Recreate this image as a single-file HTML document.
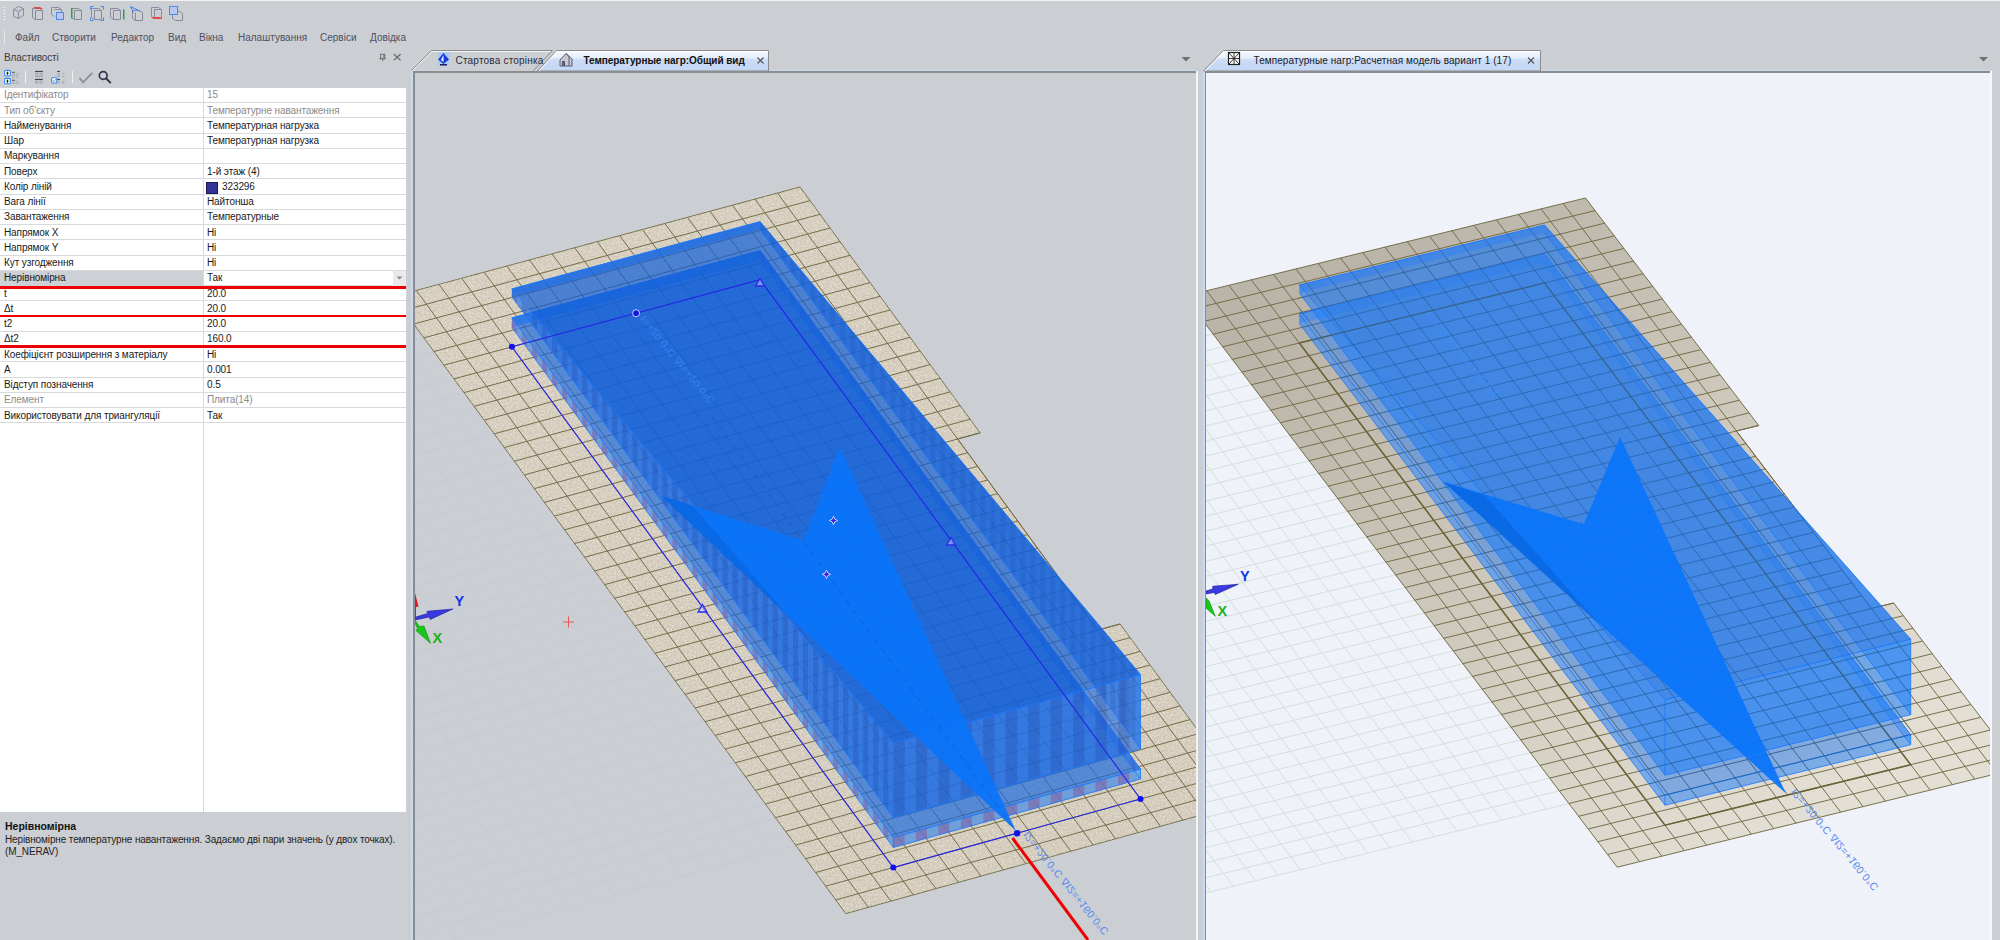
<!DOCTYPE html>
<html><head><meta charset="utf-8">
<style>
*{box-sizing:border-box;margin:0;padding:0}
html,body{width:2000px;height:940px;overflow:hidden;background:#cbced3;font-family:"Liberation Sans",sans-serif;color:#1e1e1e}
.a{position:absolute}
.t{position:absolute;white-space:pre;font-size:10px;line-height:12px}
#menu .t{color:#50505e;letter-spacing:0px}
#grid{position:absolute;left:0;top:88px;width:406px;height:724px;background:#fff}
.row{position:absolute;left:0;width:406px;height:15.25px;border-bottom:1px solid #d8d9dc}
.row .k{position:absolute;left:4px;top:1.5px;font-size:10px;line-height:12px;letter-spacing:-0.1px;white-space:pre;color:#1a1a1a}
.row .v{position:absolute;left:207px;top:1.5px;font-size:10px;line-height:12px;letter-spacing:-0.1px;white-space:pre;color:#1a1a1a}
.row.g .k,.row.g .v{color:#8a8a8a}
.redl{position:absolute;left:0;width:406px;height:2px;background:#ee0000}
</style></head><body>

<!-- top toolbar -->
<div class="a" style="left:0;top:0;width:2000px;height:1px;background:#f2f3f5"></div>
<svg class="a" style="left:0;top:0" width="200" height="26" viewBox="0 0 200 26">
  <g fill="none" stroke="#7b7b93" stroke-width="1">
    <!-- dotted handle -->
  </g>
  <g fill="#fff"><rect x="4" y="7" width="1" height="1"/><rect x="4" y="10" width="1" height="1"/><rect x="4" y="13" width="1" height="1"/><rect x="4" y="16" width="1" height="1"/><rect x="4" y="19" width="1" height="1"/></g>
  <g fill="none" stroke="#8a8aa0" stroke-width="1">
    <path d="M13.5 9.5 l5-3 5 2 v7 l-5 3 -5-2z M13.5 9.5 l5 2 5-3 M18.5 11.5 v7"/>
    <path d="M32.5 8.5 h7 l3 2 v9 h-7 l-3-2z M35.5 10.5 h7 M35.5 10.5 v9"/>
    <path d="M51.5 7.5 h7 l3 2 v3 M51.5 7.5 v7 l3 2 M54.5 9.5 h7"/>
    <path d="M71.5 8.5 h7 l3 2 v9 h-7 l-3-2z M74.5 10.5 h7 M74.5 10.5 v9"/>
    <path d="M91.5 8.5 h7 l3 2 v9 h-7 l-3-2z M94.5 10.5 h7 M94.5 10.5 v9"/>
    <path d="M110.5 8.5 h7 l3 2 v9 h-7 l-3-2z M113.5 10.5 h7 M113.5 10.5 v9"/>
    <path d="M132.5 10.5 h7 l3 2 v8 h-7 l-3-2z M135.5 12.5 v8"/>
    <path d="M151.5 7.5 h7 l3 2 v9 h-7 l-3-2z M154.5 9.5 h7 M154.5 9.5 v9"/>
    <path d="M172.5 11.5 h7 l3 2 v7 h-7 l-3-2z"/>
  </g>
  <path d="M33 7 h7 l3 2 h-7z" fill="#e84545"/>
  <rect x="56.5" y="12.5" width="7" height="7" fill="#b8c8f0" stroke="#4a8af5"/>
  <path d="M71 8 v10 l1.5 1 v-10z" fill="#2aa040"/>
  <path d="M90.5 9.5 v-3 h3 M100.5 6.5 h3 v3 M103.5 17.5 v3 h-3 M93.5 20.5 h-3 v-3" fill="none" stroke="#3a8af5"/>
  <path d="M123 9 v10 l1.5 1 v-10z" fill="#2aa040"/>
  <path d="M130.5 6.5 l10 5 M130.5 6.5 l3 6" fill="none" stroke="#3a7af5"/>
  <path d="M151 17 h9 l2.5 2 h-9z" fill="#e84545"/>
  <rect x="169.5" y="6.5" width="8" height="8" fill="#b8c8f0" stroke="#4a8af5"/>
</svg>

<!-- menu -->
<div id="menu">
<div class="a" style="left:4px;top:30px;width:1px;height:13px;border-left:1px dotted #fff"></div>
<div class="t" style="left:15px;top:31.5px">Файл</div>
<div class="t" style="left:52px;top:31.5px">Створити</div>
<div class="t" style="left:111px;top:31.5px">Редактор</div>
<div class="t" style="left:168px;top:31.5px">Вид</div>
<div class="t" style="left:199px;top:31.5px">Вікна</div>
<div class="t" style="left:238px;top:31.5px">Налаштування</div>
<div class="t" style="left:320px;top:31.5px">Сервіси</div>
<div class="t" style="left:370px;top:31.5px">Довідка</div>
</div>

<!-- properties header -->
<div class="t" style="left:4px;top:52px;color:#3c3c44;letter-spacing:-0.1px">Властивості</div>
<svg class="a" style="left:376px;top:50px" width="14" height="14" viewBox="376 50 14 14"><rect x="380.6" y="54.3" width="4.2" height="4.3" fill="none" stroke="#777" stroke-width="1.1"/><rect x="383.3" y="54.3" width="1.5" height="4.3" fill="#777"/><path d="M379.2 58.8h6.8M382.6 59v2" stroke="#777" stroke-width="1.1"/></svg>
<svg class="a" style="left:393px;top:53px" width="10" height="10"><path d="M0.8 1 L7.6 7.4 M7.6 1 L0.8 7.4" stroke="#6a6a6a" stroke-width="1.3"/></svg>

<!-- properties toolbar -->
<svg class="a" style="left:0;top:64px" width="120" height="24" viewBox="0 64 120 24">
  <rect x="4.6" y="70.4" width="5.8" height="5.3" rx="1" fill="#fff" stroke="#3a8af5" stroke-width="1.1"/>
  <rect x="4.6" y="78.4" width="5.8" height="5.3" rx="1" fill="#fff" stroke="#3a8af5" stroke-width="1.1"/>
  <path d="M7.5 71.6v3.2M6.3 73.2h2.4M7.5 79.6v3.2M6.3 81.2h2.4" stroke="#111" stroke-width="0.9"/>
  <path d="M12 72.3h3M12 80.3h3" stroke="#555" stroke-width="0.9"/>
  <path d="M12 74h3M12 75.5h3M15.8 73.5h2.8M15.8 75.3h2.8M12 77.2h3M15.8 77.2h2.8M12 82h3M12 83.5h3M15.8 81.5h2.8M15.8 83.3h2.8" stroke="#a8a8b8" stroke-width="0.9"/>
  <path d="M25.5 71v12" stroke="#f2f2f2" stroke-width="1"/>
  <path d="M35 71.4h7.9M35 79.4h7.9" stroke="#333" stroke-width="1"/>
  <path d="M35 73.2h3.5M39.4 73.2h3.5M35 74.9h3.5M39.4 74.9h3.5M35 76.5h7.9M35 81.2h3.5M39.4 81.2h3.5M35 83h3.5M39.4 83h3.5" stroke="#a0a0b4" stroke-width="1"/>
  <path d="M57.2 71.4h2.8M57.2 79.4h2.8" stroke="#333" stroke-width="1"/>
  <path d="M57.2 73.2h2.8M57.2 74.9h2.8M57.2 76.5h2.8M62 73.5h2.6M62 76.3h2.6M57.2 81.2h2.8M57.2 83h2.8M62 81.5h2.6M62 83.2h2.6" stroke="#a8a8bc" stroke-width="1"/>
  <rect x="51.6" y="77.8" width="5.2" height="5.2" rx="1" fill="#fff" stroke="#3a8af5" stroke-width="1.1"/>
  <path d="M52.6 80.2l1.3 1.6 2.3-3" fill="none" stroke="#777" stroke-width="0.8"/>
  <path d="M72.5 71v12" stroke="#f2f2f2" stroke-width="1"/>
  <path d="M79.5 77.8 L83.1 82.4 L92.2 72.8" fill="none" stroke="#8e90a4" stroke-width="1.9"/>
  <circle cx="103.2" cy="75.5" r="3.9" fill="none" stroke="#33334e" stroke-width="1.7"/>
  <path d="M106 78.3 L110.8 83.1" stroke="#33334e" stroke-width="2"/>
</svg>

<!-- property grid -->
<div id="grid">
  <div class="a" style="left:203px;top:0;width:1px;height:724px;background:#d8d9dc"></div>
</div>
<div id="rows">
<div class="row g" style="top:87.90px"><div class="k">Ідентифікатор</div><div class="v">15</div></div>
<div class="row g" style="top:103.15px"><div class="k">Тип об'єкту</div><div class="v">Температурне навантаження</div></div>
<div class="row" style="top:118.40px"><div class="k">Найменування</div><div class="v">Температурная нагрузка</div></div>
<div class="row" style="top:133.65px"><div class="k">Шар</div><div class="v">Температурная нагрузка</div></div>
<div class="row" style="top:148.90px"><div class="k">Маркування</div><div class="v"></div></div>
<div class="row" style="top:164.15px"><div class="k">Поверх</div><div class="v">1-й этаж (4)</div></div>
<div class="row" style="top:179.40px"><div class="k">Колір ліній</div><div class="a" style="left:206px;top:2.5px;width:12px;height:12px;background:#323296;border:1px solid #1a1a50"></div><div class="v" style="left:222px">323296</div></div>
<div class="row" style="top:194.65px"><div class="k">Вага лінії</div><div class="v">Найтонша</div></div>
<div class="row" style="top:209.90px"><div class="k">Завантаження</div><div class="v">Температурные</div></div>
<div class="row" style="top:225.15px"><div class="k">Напрямок X</div><div class="v">Ні</div></div>
<div class="row" style="top:240.40px"><div class="k">Напрямок Y</div><div class="v">Ні</div></div>
<div class="row" style="top:255.65px"><div class="k">Кут узгодження</div><div class="v">Ні</div></div>
<div class="row" style="top:270.90px"><div class="a" style="left:0;top:0;width:203px;height:15px;background:#cdd0d5"></div><div class="a" style="left:393px;top:0;width:13px;height:15px;background:#e9eaec"></div><svg class="a" style="left:396px;top:5px" width="7" height="5"><path d="M0.5 0.5h6l-3 3z" fill="#8a8a8a"/></svg><div class="k">Нерівномірна</div><div class="v">Так</div></div>
<div class="row" style="top:286.15px"><div class="k">t</div><div class="v">20.0</div></div>
<div class="row" style="top:301.40px"><div class="k">Δt</div><div class="v">20.0</div></div>
<div class="row" style="top:316.65px"><div class="k">t2</div><div class="v">20.0</div></div>
<div class="row" style="top:331.90px"><div class="k">Δt2</div><div class="v">160.0</div></div>
<div class="row" style="top:347.15px"><div class="k">Коефіцієнт розширення з матеріалу</div><div class="v">Ні</div></div>
<div class="row" style="top:362.40px"><div class="k">A</div><div class="v">0.001</div></div>
<div class="row" style="top:377.65px"><div class="k">Відступ позначення</div><div class="v">0.5</div></div>
<div class="row g" style="top:392.90px"><div class="k">Елемент</div><div class="v">Плита(14)</div></div>
<div class="row" style="top:408.15px"><div class="k">Використовувати для триангуляції</div><div class="v">Так</div></div>
<div class="redl" style="top:286px;height:2.5px"></div><div class="redl" style="top:314.9px;height:2.5px"></div><div class="redl" style="top:345.1px;height:2.5px"></div>
</div>

<!-- description -->
<div class="a" style="left:1px;top:812px;width:404px;height:128px;background:#cbced3"></div>
<div class="t" style="left:5px;top:820px;font-weight:bold;font-size:10.5px;color:#111">Нерівномірна</div>
<div class="t" style="left:5px;top:833.5px;letter-spacing:-0.13px;color:#222">Нерівномірне температурне навантаження. Задаємо дві пари значень (у двох точках).</div>
<div class="t" style="left:5px;top:845.5px;letter-spacing:-0.13px;color:#222">(M_NERAV)</div>

<!-- splitter -->
<div class="a" style="left:406px;top:88px;width:5px;height:852px;background:#cbced3"></div>

<!-- VIEWPORT 1 -->
<div id="vp1"><svg class="a" style="left:415px;top:73px" width="781" height="867" viewBox="415 73 781 867">
<rect x="415" y="73" width="781" height="867" fill="#cbced3"/>
<path d="M-392.4 343.2L114.0 1033.5M-369.4 337.0L136.9 1027.2M-346.4 330.8L159.7 1020.9M-323.4 324.7L182.6 1014.6M-300.4 318.5L205.4 1008.3M-277.4 312.4L228.3 1001.9M-254.5 306.2L251.1 995.6M-231.6 300.1L273.9 989.3M-208.6 293.9L296.7 983.0M-185.7 287.8L319.5 976.7M-162.8 281.6L342.2 970.4M-139.9 275.5L365.0 964.1M-117.0 269.4L387.8 957.8M-94.1 263.2L410.5 951.5M-71.3 257.1L433.3 945.3M-48.4 251.0L456.0 939.0M-25.6 244.8L478.7 932.7M-2.7 238.7L501.4 926.4M20.1 232.6L524.1 920.1M42.9 226.5L546.8 913.9M65.7 220.4L569.4 907.6M88.5 214.3L592.1 901.3M111.3 208.2L614.8 895.1M134.1 202.0L637.4 888.8M156.8 195.9L660.0 882.6M179.6 189.8L682.6 876.3M202.3 183.8L705.3 870.1M225.0 177.7L727.9 863.8M247.8 171.6L750.4 857.6M270.5 165.5L773.0 851.3M293.2 159.4L795.6 845.1M-392.4 343.2L293.2 159.4M-382.2 357.0L303.2 173.1M-372.1 370.8L313.3 186.8M-362.0 384.6L323.3 200.6M-351.8 398.4L333.4 214.3M-341.7 412.2L343.4 228.0M-331.6 426.1L353.5 241.7M-321.4 439.9L363.5 255.4M-311.3 453.7L373.6 269.2M-301.2 467.5L383.6 282.9M-291.0 481.3L393.7 296.6M-280.9 495.1L403.8 310.3M-270.8 508.9L413.8 324.0M-260.7 522.7L423.9 337.8M-250.5 536.6L433.9 351.5M-240.4 550.4L444.0 365.2M-230.3 564.2L454.0 378.9M-220.1 578.0L464.1 392.6M-210.0 591.8L474.1 406.3M-199.9 605.6L484.2 420.1M-189.8 619.4L494.2 433.8M-179.6 633.2L504.3 447.5M-169.5 647.0L514.3 461.2M-159.4 660.8L524.4 474.9M-149.2 674.7L534.4 488.6M-139.1 688.5L544.5 502.3M-129.0 702.3L554.5 516.1M-118.9 716.1L564.6 529.8M-108.7 729.9L574.6 543.5M-98.6 743.7L584.6 557.2M-88.5 757.5L594.7 570.9M-78.4 771.3L604.7 584.6M-68.2 785.1L614.8 598.3M-58.1 798.9L624.8 612.0M-48.0 812.7L634.9 625.8M-37.9 826.5L644.9 639.5M-27.7 840.3L655.0 653.2M-17.6 854.1L665.0 666.9M-7.5 867.9L675.1 680.6M2.6 881.7L685.1 694.3M12.8 895.5L695.2 708.0M22.9 909.3L705.2 721.7M33.0 923.1L715.2 735.4M43.1 936.9L725.3 749.1M53.3 950.7L735.3 762.8M63.4 964.5L745.4 776.5M73.5 978.3L755.4 790.3M83.6 992.1L765.5 804.0M93.8 1005.9L775.5 817.7M103.9 1019.7L785.5 831.4M114.0 1033.5L795.6 845.1" stroke="#c6cad9" stroke-width="1" fill="none"/>
<defs><linearGradient id="sg1" gradientUnits="userSpaceOnUse" x1="597" y1="242" x2="1048" y2="857"><stop offset="0" stop-color="#d3cab9"/><stop offset="1" stop-color="#d1c8b7"/></linearGradient></defs>
<polygon points="393.7,296.6 800.0,187.0 980.1,432.9 957.6,439.0 1097.6,630.2 1120.1,624.0 1250.0,801.5 845.8,913.6" fill="url(#sg1)" stroke="#6f6843" stroke-width="0.95"/>
<filter id="spk1" x="0" y="0" width="1" height="1"><feTurbulence type="fractalNoise" baseFrequency="0.55" numOctaves="2" seed="7" result="n"/><feColorMatrix in="n" type="matrix" values="0 0 0 0 1  0 0 0 0 1  0 0 0 0 1  0 0 0 -2.2 1.35"/><feComposite in2="SourceGraphic" operator="in"/></filter>
<polygon points="393.7,296.6 800.0,187.0 980.1,432.9 957.6,439.0 1097.6,630.2 1120.1,624.0 1250.0,801.5 845.8,913.6" fill="#fff" filter="url(#spk1)" opacity="0.45"/>
<filter id="spd1" x="0" y="0" width="1" height="1"><feTurbulence type="fractalNoise" baseFrequency="0.5" numOctaves="2" seed="11" result="n"/><feColorMatrix in="n" type="matrix" values="0 0 0 0 0.45  0 0 0 0 0.4  0 0 0 0 0.32  0 0 0 2.4 -1.35"/><feComposite in2="SourceGraphic" operator="in"/></filter>
<polygon points="393.7,296.6 800.0,187.0 980.1,432.9 957.6,439.0 1097.6,630.2 1120.1,624.0 1250.0,801.5 845.8,913.6" fill="#000" filter="url(#spd1)" opacity="0.45"/>
<path d="M416.4 290.5L868.3 907.3M439.0 284.4L890.9 901.1M461.7 278.3L913.4 894.9M484.3 272.2L935.9 888.6M506.9 266.1L958.4 882.4M529.5 260.0L980.9 876.1M552.1 253.9L1003.4 869.9M574.7 247.8L1025.9 863.7M597.3 241.7L1048.3 857.4M619.8 235.6L1070.8 851.2M642.4 229.5L1093.2 845.0M664.9 223.4L1115.6 838.8M687.5 217.4L1138.1 832.5M710.0 211.3L1160.5 826.3M732.5 205.2L1182.9 820.1M755.0 199.1L1205.3 813.9M777.5 193.1L957.6 439.0M1097.6 630.2L1227.6 807.7M957.6 439.0L1097.6 630.2M403.8 310.3L810.0 200.7M413.8 324.0L820.0 214.3M423.9 337.8L830.0 228.0M433.9 351.5L840.0 241.6M444.0 365.2L850.0 255.3M454.0 378.9L860.0 269.0M464.1 392.6L870.0 282.6M474.1 406.3L880.0 296.3M484.2 420.1L890.0 310.0M494.2 433.8L900.0 323.6M504.3 447.5L910.0 337.3M514.3 461.2L920.0 350.9M524.4 474.9L930.1 364.6M534.4 488.6L940.1 378.3M544.5 502.3L950.1 391.9M554.5 516.1L960.1 405.6M564.6 529.8L970.1 419.2M574.6 543.5L980.1 432.9M584.6 557.2L967.6 452.7M594.7 570.9L977.6 466.3M604.7 584.6L987.6 480.0M614.8 598.3L997.6 493.6M624.8 612.0L1007.6 507.3M634.9 625.8L1017.6 521.0M644.9 639.5L1027.6 534.6M655.0 653.2L1037.6 548.3M665.0 666.9L1047.6 561.9M675.1 680.6L1057.6 575.6M685.1 694.3L1067.6 589.2M695.2 708.0L1077.6 602.9M705.2 721.7L1087.6 616.6M715.2 735.4L1120.1 624.0M725.3 749.1L1130.0 637.7M735.3 762.8L1140.0 651.4M745.4 776.5L1150.0 665.0M755.4 790.3L1160.0 678.7M765.5 804.0L1170.0 692.3M775.5 817.7L1180.0 706.0M785.5 831.4L1190.0 719.6M795.6 845.1L1200.0 733.3M805.6 858.8L1210.0 746.9M815.7 872.5L1220.0 760.6M825.7 886.2L1230.0 774.2M835.8 899.9L1240.0 787.9" stroke="#6f6843" stroke-width="0.95" fill="none"/>

<polygon points="511.9,327.3 760.1,260.1 760.1,250.6 511.9,317.8" fill="#3a8cff" fill-opacity="0.75"/>
<polygon points="760.1,260.1 1140.5,779.0 1140.5,769.0 760.1,250.6" fill="#1f64d8" fill-opacity="0.5"/>
<polygon points="893.3,847.5 511.9,327.3 511.9,317.8 893.3,837.5" fill="#1f64d8" fill-opacity="0.5"/>
<polygon points="1140.5,779.0 893.3,847.5 893.3,837.5 1140.5,769.0" fill="#1f64d8" fill-opacity="0.5"/>
<polygon points="511.9,327.3 516.9,334.2 516.9,324.7 511.9,317.8" fill="#8a74b0" fill-opacity="0.7"/>
<polygon points="516.9,334.2 521.9,341.0 521.9,331.5 516.9,324.7" fill="#78b0e6" fill-opacity="0.6"/>
<polygon points="521.9,341.0 526.9,347.9 526.9,338.3 521.9,331.5" fill="#8a74b0" fill-opacity="0.7"/>
<polygon points="526.9,347.9 532.0,354.7 532.0,345.2 526.9,338.3" fill="#78b0e6" fill-opacity="0.6"/>
<polygon points="532.0,354.7 537.0,361.5 537.0,352.0 532.0,345.2" fill="#8a74b0" fill-opacity="0.7"/>
<polygon points="537.0,361.5 542.0,368.4 542.0,358.9 537.0,352.0" fill="#78b0e6" fill-opacity="0.6"/>
<polygon points="542.0,368.4 547.0,375.2 547.0,365.7 542.0,358.9" fill="#8a74b0" fill-opacity="0.7"/>
<polygon points="547.0,375.2 552.0,382.1 552.0,372.5 547.0,365.7" fill="#78b0e6" fill-opacity="0.6"/>
<polygon points="552.0,382.1 557.1,388.9 557.1,379.4 552.0,372.5" fill="#8a74b0" fill-opacity="0.7"/>
<polygon points="557.1,388.9 562.1,395.8 562.1,386.2 557.1,379.4" fill="#78b0e6" fill-opacity="0.6"/>
<polygon points="562.1,395.8 567.1,402.6 567.1,393.1 562.1,386.2" fill="#8a74b0" fill-opacity="0.7"/>
<polygon points="567.1,402.6 572.1,409.5 572.1,399.9 567.1,393.1" fill="#78b0e6" fill-opacity="0.6"/>
<polygon points="572.1,409.5 577.1,416.3 577.1,406.7 572.1,399.9" fill="#8a74b0" fill-opacity="0.7"/>
<polygon points="577.1,416.3 582.2,423.2 582.2,413.6 577.1,406.7" fill="#78b0e6" fill-opacity="0.6"/>
<polygon points="582.2,423.2 587.2,430.0 587.2,420.4 582.2,413.6" fill="#8a74b0" fill-opacity="0.7"/>
<polygon points="587.2,430.0 592.2,436.9 592.2,427.3 587.2,420.4" fill="#78b0e6" fill-opacity="0.6"/>
<polygon points="592.2,436.9 597.2,443.7 597.2,434.1 592.2,427.3" fill="#8a74b0" fill-opacity="0.7"/>
<polygon points="597.2,443.7 602.2,450.6 602.2,440.9 597.2,434.1" fill="#78b0e6" fill-opacity="0.6"/>
<polygon points="602.2,450.6 607.3,457.4 607.3,447.8 602.2,440.9" fill="#8a74b0" fill-opacity="0.7"/>
<polygon points="607.3,457.4 612.3,464.2 612.3,454.6 607.3,447.8" fill="#78b0e6" fill-opacity="0.6"/>
<polygon points="612.3,464.2 617.3,471.1 617.3,461.4 612.3,454.6" fill="#8a74b0" fill-opacity="0.7"/>
<polygon points="617.3,471.1 622.3,477.9 622.3,468.3 617.3,461.4" fill="#78b0e6" fill-opacity="0.6"/>
<polygon points="622.3,477.9 627.4,484.8 627.4,475.1 622.3,468.3" fill="#8a74b0" fill-opacity="0.7"/>
<polygon points="627.4,484.8 632.4,491.6 632.4,482.0 627.4,475.1" fill="#78b0e6" fill-opacity="0.6"/>
<polygon points="632.4,491.6 637.4,498.5 637.4,488.8 632.4,482.0" fill="#8a74b0" fill-opacity="0.7"/>
<polygon points="637.4,498.5 642.4,505.3 642.4,495.6 637.4,488.8" fill="#78b0e6" fill-opacity="0.6"/>
<polygon points="642.4,505.3 647.4,512.2 647.4,502.5 642.4,495.6" fill="#8a74b0" fill-opacity="0.7"/>
<polygon points="647.4,512.2 652.5,519.0 652.5,509.3 647.4,502.5" fill="#78b0e6" fill-opacity="0.6"/>
<polygon points="652.5,519.0 657.5,525.8 657.5,516.2 652.5,509.3" fill="#8a74b0" fill-opacity="0.7"/>
<polygon points="657.5,525.8 662.5,532.7 662.5,523.0 657.5,516.2" fill="#78b0e6" fill-opacity="0.6"/>
<polygon points="662.5,532.7 667.5,539.5 667.5,529.8 662.5,523.0" fill="#8a74b0" fill-opacity="0.7"/>
<polygon points="667.5,539.5 672.5,546.4 672.5,536.7 667.5,529.8" fill="#78b0e6" fill-opacity="0.6"/>
<polygon points="672.5,546.4 677.5,553.2 677.5,543.5 672.5,536.7" fill="#8a74b0" fill-opacity="0.7"/>
<polygon points="677.5,553.2 682.6,560.1 682.6,550.3 677.5,543.5" fill="#78b0e6" fill-opacity="0.6"/>
<polygon points="682.6,560.1 687.6,566.9 687.6,557.2 682.6,550.3" fill="#8a74b0" fill-opacity="0.7"/>
<polygon points="687.6,566.9 692.6,573.8 692.6,564.0 687.6,557.2" fill="#78b0e6" fill-opacity="0.6"/>
<polygon points="692.6,573.8 697.6,580.6 697.6,570.9 692.6,564.0" fill="#8a74b0" fill-opacity="0.7"/>
<polygon points="697.6,580.6 702.6,587.4 702.6,577.7 697.6,570.9" fill="#78b0e6" fill-opacity="0.6"/>
<polygon points="702.6,587.4 707.7,594.3 707.7,584.5 702.6,577.7" fill="#8a74b0" fill-opacity="0.7"/>
<polygon points="707.7,594.3 712.7,601.1 712.7,591.4 707.7,584.5" fill="#78b0e6" fill-opacity="0.6"/>
<polygon points="712.7,601.1 717.7,608.0 717.7,598.2 712.7,591.4" fill="#8a74b0" fill-opacity="0.7"/>
<polygon points="717.7,608.0 722.7,614.8 722.7,605.0 717.7,598.2" fill="#78b0e6" fill-opacity="0.6"/>
<polygon points="722.7,614.8 727.7,621.7 727.7,611.9 722.7,605.0" fill="#8a74b0" fill-opacity="0.7"/>
<polygon points="727.7,621.7 732.8,628.5 732.8,618.7 727.7,611.9" fill="#78b0e6" fill-opacity="0.6"/>
<polygon points="732.8,628.5 737.8,635.4 737.8,625.6 732.8,618.7" fill="#8a74b0" fill-opacity="0.7"/>
<polygon points="737.8,635.4 742.8,642.2 742.8,632.4 737.8,625.6" fill="#78b0e6" fill-opacity="0.6"/>
<polygon points="742.8,642.2 747.8,649.0 747.8,639.2 742.8,632.4" fill="#8a74b0" fill-opacity="0.7"/>
<polygon points="747.8,649.0 752.8,655.9 752.8,646.1 747.8,639.2" fill="#78b0e6" fill-opacity="0.6"/>
<polygon points="752.8,655.9 757.9,662.7 757.9,652.9 752.8,646.1" fill="#8a74b0" fill-opacity="0.7"/>
<polygon points="757.9,662.7 762.9,669.6 762.9,659.7 757.9,652.9" fill="#78b0e6" fill-opacity="0.6"/>
<polygon points="762.9,669.6 767.9,676.4 767.9,666.6 762.9,659.7" fill="#8a74b0" fill-opacity="0.7"/>
<polygon points="767.9,676.4 772.9,683.3 772.9,673.4 767.9,666.6" fill="#78b0e6" fill-opacity="0.6"/>
<polygon points="772.9,683.3 777.9,690.1 777.9,680.3 772.9,673.4" fill="#8a74b0" fill-opacity="0.7"/>
<polygon points="777.9,690.1 782.9,696.9 782.9,687.1 777.9,680.3" fill="#78b0e6" fill-opacity="0.6"/>
<polygon points="782.9,696.9 788.0,703.8 788.0,693.9 782.9,687.1" fill="#8a74b0" fill-opacity="0.7"/>
<polygon points="788.0,703.8 793.0,710.6 793.0,700.8 788.0,693.9" fill="#78b0e6" fill-opacity="0.6"/>
<polygon points="793.0,710.6 798.0,717.5 798.0,707.6 793.0,700.8" fill="#8a74b0" fill-opacity="0.7"/>
<polygon points="798.0,717.5 803.0,724.3 803.0,714.4 798.0,707.6" fill="#78b0e6" fill-opacity="0.6"/>
<polygon points="803.0,724.3 808.0,731.2 808.0,721.3 803.0,714.4" fill="#8a74b0" fill-opacity="0.7"/>
<polygon points="808.0,731.2 813.1,738.0 813.1,728.1 808.0,721.3" fill="#78b0e6" fill-opacity="0.6"/>
<polygon points="813.1,738.0 818.1,744.8 818.1,734.9 813.1,728.1" fill="#8a74b0" fill-opacity="0.7"/>
<polygon points="818.1,744.8 823.1,751.7 823.1,741.8 818.1,734.9" fill="#78b0e6" fill-opacity="0.6"/>
<polygon points="823.1,751.7 828.1,758.5 828.1,748.6 823.1,741.8" fill="#8a74b0" fill-opacity="0.7"/>
<polygon points="828.1,758.5 833.1,765.4 833.1,755.4 828.1,748.6" fill="#78b0e6" fill-opacity="0.6"/>
<polygon points="833.1,765.4 838.1,772.2 838.1,762.3 833.1,755.4" fill="#8a74b0" fill-opacity="0.7"/>
<polygon points="838.1,772.2 843.2,779.0 843.2,769.1 838.1,762.3" fill="#78b0e6" fill-opacity="0.6"/>
<polygon points="843.2,779.0 848.2,785.9 848.2,776.0 843.2,769.1" fill="#8a74b0" fill-opacity="0.7"/>
<polygon points="848.2,785.9 853.2,792.7 853.2,782.8 848.2,776.0" fill="#78b0e6" fill-opacity="0.6"/>
<polygon points="853.2,792.7 858.2,799.6 858.2,789.6 853.2,782.8" fill="#8a74b0" fill-opacity="0.7"/>
<polygon points="858.2,799.6 863.2,806.4 863.2,796.5 858.2,789.6" fill="#78b0e6" fill-opacity="0.6"/>
<polygon points="863.2,806.4 868.2,813.3 868.2,803.3 863.2,796.5" fill="#8a74b0" fill-opacity="0.7"/>
<polygon points="868.2,813.3 873.3,820.1 873.3,810.1 868.2,803.3" fill="#78b0e6" fill-opacity="0.6"/>
<polygon points="873.3,820.1 878.3,826.9 878.3,817.0 873.3,810.1" fill="#8a74b0" fill-opacity="0.7"/>
<polygon points="878.3,826.9 883.3,833.8 883.3,823.8 878.3,817.0" fill="#78b0e6" fill-opacity="0.6"/>
<polygon points="883.3,833.8 888.3,840.6 888.3,830.6 883.3,823.8" fill="#8a74b0" fill-opacity="0.7"/>
<polygon points="888.3,840.6 893.3,847.5 893.3,837.5 888.3,830.6" fill="#78b0e6" fill-opacity="0.6"/>
<polygon points="760.1,260.1 765.1,267.0 765.1,257.5 760.1,250.6" fill="#8a74b0" fill-opacity="0.7"/>
<polygon points="765.1,267.0 770.1,273.8 770.1,264.3 765.1,257.5" fill="#78b0e6" fill-opacity="0.6"/>
<polygon points="770.1,273.8 775.1,280.6 775.1,271.1 770.1,264.3" fill="#8a74b0" fill-opacity="0.7"/>
<polygon points="775.1,280.6 780.1,287.5 780.1,277.9 775.1,271.1" fill="#78b0e6" fill-opacity="0.6"/>
<polygon points="780.1,287.5 785.1,294.3 785.1,284.8 780.1,277.9" fill="#8a74b0" fill-opacity="0.7"/>
<polygon points="785.1,294.3 790.1,301.1 790.1,291.6 785.1,284.8" fill="#78b0e6" fill-opacity="0.6"/>
<polygon points="790.1,301.1 795.1,308.0 795.1,298.4 790.1,291.6" fill="#8a74b0" fill-opacity="0.7"/>
<polygon points="795.1,308.0 800.1,314.8 800.1,305.2 795.1,298.4" fill="#78b0e6" fill-opacity="0.6"/>
<polygon points="800.1,314.8 805.1,321.6 805.1,312.1 800.1,305.2" fill="#8a74b0" fill-opacity="0.7"/>
<polygon points="805.1,321.6 810.1,328.4 810.1,318.9 805.1,312.1" fill="#78b0e6" fill-opacity="0.6"/>
<polygon points="810.1,328.4 815.2,335.3 815.2,325.7 810.1,318.9" fill="#8a74b0" fill-opacity="0.7"/>
<polygon points="815.2,335.3 820.2,342.1 820.2,332.5 815.2,325.7" fill="#78b0e6" fill-opacity="0.6"/>
<polygon points="820.2,342.1 825.2,348.9 825.2,339.4 820.2,332.5" fill="#8a74b0" fill-opacity="0.7"/>
<polygon points="825.2,348.9 830.2,355.8 830.2,346.2 825.2,339.4" fill="#78b0e6" fill-opacity="0.6"/>
<polygon points="830.2,355.8 835.2,362.6 835.2,353.0 830.2,346.2" fill="#8a74b0" fill-opacity="0.7"/>
<polygon points="835.2,362.6 840.2,369.4 840.2,359.8 835.2,353.0" fill="#78b0e6" fill-opacity="0.6"/>
<polygon points="840.2,369.4 845.2,376.3 845.2,366.6 840.2,359.8" fill="#8a74b0" fill-opacity="0.7"/>
<polygon points="845.2,376.3 850.2,383.1 850.2,373.5 845.2,366.6" fill="#78b0e6" fill-opacity="0.6"/>
<polygon points="850.2,383.1 855.2,389.9 855.2,380.3 850.2,373.5" fill="#8a74b0" fill-opacity="0.7"/>
<polygon points="855.2,389.9 860.2,396.7 860.2,387.1 855.2,380.3" fill="#78b0e6" fill-opacity="0.6"/>
<polygon points="860.2,396.7 865.2,403.6 865.2,393.9 860.2,387.1" fill="#8a74b0" fill-opacity="0.7"/>
<polygon points="865.2,403.6 870.2,410.4 870.2,400.8 865.2,393.9" fill="#78b0e6" fill-opacity="0.6"/>
<polygon points="870.2,410.4 875.2,417.2 875.2,407.6 870.2,400.8" fill="#8a74b0" fill-opacity="0.7"/>
<polygon points="875.2,417.2 880.2,424.1 880.2,414.4 875.2,407.6" fill="#78b0e6" fill-opacity="0.6"/>
<polygon points="880.2,424.1 885.2,430.9 885.2,421.2 880.2,414.4" fill="#8a74b0" fill-opacity="0.7"/>
<polygon points="885.2,430.9 890.2,437.7 890.2,428.0 885.2,421.2" fill="#78b0e6" fill-opacity="0.6"/>
<polygon points="890.2,437.7 895.3,444.5 895.3,434.9 890.2,428.0" fill="#8a74b0" fill-opacity="0.7"/>
<polygon points="895.3,444.5 900.3,451.4 900.3,441.7 895.3,434.9" fill="#78b0e6" fill-opacity="0.6"/>
<polygon points="900.3,451.4 905.3,458.2 905.3,448.5 900.3,441.7" fill="#8a74b0" fill-opacity="0.7"/>
<polygon points="905.3,458.2 910.3,465.0 910.3,455.3 905.3,448.5" fill="#78b0e6" fill-opacity="0.6"/>
<polygon points="910.3,465.0 915.3,471.8 915.3,462.1 910.3,455.3" fill="#8a74b0" fill-opacity="0.7"/>
<polygon points="915.3,471.8 920.3,478.7 920.3,469.0 915.3,462.1" fill="#78b0e6" fill-opacity="0.6"/>
<polygon points="920.3,478.7 925.3,485.5 925.3,475.8 920.3,469.0" fill="#8a74b0" fill-opacity="0.7"/>
<polygon points="925.3,485.5 930.3,492.3 930.3,482.6 925.3,475.8" fill="#78b0e6" fill-opacity="0.6"/>
<polygon points="930.3,492.3 935.3,499.2 935.3,489.4 930.3,482.6" fill="#8a74b0" fill-opacity="0.7"/>
<polygon points="935.3,499.2 940.3,506.0 940.3,496.2 935.3,489.4" fill="#78b0e6" fill-opacity="0.6"/>
<polygon points="940.3,506.0 945.3,512.8 945.3,503.1 940.3,496.2" fill="#8a74b0" fill-opacity="0.7"/>
<polygon points="945.3,512.8 950.3,519.6 950.3,509.9 945.3,503.1" fill="#78b0e6" fill-opacity="0.6"/>
<polygon points="950.3,519.6 955.3,526.5 955.3,516.7 950.3,509.9" fill="#8a74b0" fill-opacity="0.7"/>
<polygon points="955.3,526.5 960.3,533.3 960.3,523.5 955.3,516.7" fill="#78b0e6" fill-opacity="0.6"/>
<polygon points="960.3,533.3 965.3,540.1 965.3,530.4 960.3,523.5" fill="#8a74b0" fill-opacity="0.7"/>
<polygon points="965.3,540.1 970.3,546.9 970.3,537.2 965.3,530.4" fill="#78b0e6" fill-opacity="0.6"/>
<polygon points="970.3,546.9 975.3,553.8 975.3,544.0 970.3,537.2" fill="#8a74b0" fill-opacity="0.7"/>
<polygon points="975.3,553.8 980.3,560.6 980.3,550.8 975.3,544.0" fill="#78b0e6" fill-opacity="0.6"/>
<polygon points="980.3,560.6 985.3,567.4 985.3,557.6 980.3,550.8" fill="#8a74b0" fill-opacity="0.7"/>
<polygon points="985.3,567.4 990.4,574.3 990.4,564.5 985.3,557.6" fill="#78b0e6" fill-opacity="0.6"/>
<polygon points="990.4,574.3 995.4,581.1 995.4,571.3 990.4,564.5" fill="#8a74b0" fill-opacity="0.7"/>
<polygon points="995.4,581.1 1000.4,587.9 1000.4,578.1 995.4,571.3" fill="#78b0e6" fill-opacity="0.6"/>
<polygon points="1000.4,587.9 1005.4,594.7 1005.4,584.9 1000.4,578.1" fill="#8a74b0" fill-opacity="0.7"/>
<polygon points="1005.4,594.7 1010.4,601.6 1010.4,591.7 1005.4,584.9" fill="#78b0e6" fill-opacity="0.6"/>
<polygon points="1010.4,601.6 1015.4,608.4 1015.4,598.5 1010.4,591.7" fill="#8a74b0" fill-opacity="0.7"/>
<polygon points="1015.4,608.4 1020.4,615.2 1020.4,605.4 1015.4,598.5" fill="#78b0e6" fill-opacity="0.6"/>
<polygon points="1020.4,615.2 1025.4,622.0 1025.4,612.2 1020.4,605.4" fill="#8a74b0" fill-opacity="0.7"/>
<polygon points="1025.4,622.0 1030.4,628.9 1030.4,619.0 1025.4,612.2" fill="#78b0e6" fill-opacity="0.6"/>
<polygon points="1030.4,628.9 1035.4,635.7 1035.4,625.8 1030.4,619.0" fill="#8a74b0" fill-opacity="0.7"/>
<polygon points="1035.4,635.7 1040.4,642.5 1040.4,632.6 1035.4,625.8" fill="#78b0e6" fill-opacity="0.6"/>
<polygon points="1040.4,642.5 1045.4,649.3 1045.4,639.5 1040.4,632.6" fill="#8a74b0" fill-opacity="0.7"/>
<polygon points="1045.4,649.3 1050.4,656.2 1050.4,646.3 1045.4,639.5" fill="#78b0e6" fill-opacity="0.6"/>
<polygon points="1050.4,656.2 1055.4,663.0 1055.4,653.1 1050.4,646.3" fill="#8a74b0" fill-opacity="0.7"/>
<polygon points="1055.4,663.0 1060.4,669.8 1060.4,659.9 1055.4,653.1" fill="#78b0e6" fill-opacity="0.6"/>
<polygon points="1060.4,669.8 1065.4,676.6 1065.4,666.7 1060.4,659.9" fill="#8a74b0" fill-opacity="0.7"/>
<polygon points="1065.4,676.6 1070.4,683.5 1070.4,673.6 1065.4,666.7" fill="#78b0e6" fill-opacity="0.6"/>
<polygon points="1070.4,683.5 1075.4,690.3 1075.4,680.4 1070.4,673.6" fill="#8a74b0" fill-opacity="0.7"/>
<polygon points="1075.4,690.3 1080.4,697.1 1080.4,687.2 1075.4,680.4" fill="#78b0e6" fill-opacity="0.6"/>
<polygon points="1080.4,697.1 1085.4,703.9 1085.4,694.0 1080.4,687.2" fill="#8a74b0" fill-opacity="0.7"/>
<polygon points="1085.4,703.9 1090.4,710.8 1090.4,700.8 1085.4,694.0" fill="#78b0e6" fill-opacity="0.6"/>
<polygon points="1090.4,710.8 1095.4,717.6 1095.4,707.6 1090.4,700.8" fill="#8a74b0" fill-opacity="0.7"/>
<polygon points="1095.4,717.6 1100.4,724.4 1100.4,714.5 1095.4,707.6" fill="#78b0e6" fill-opacity="0.6"/>
<polygon points="1100.4,724.4 1105.4,731.2 1105.4,721.3 1100.4,714.5" fill="#8a74b0" fill-opacity="0.7"/>
<polygon points="1105.4,731.2 1110.4,738.1 1110.4,728.1 1105.4,721.3" fill="#78b0e6" fill-opacity="0.6"/>
<polygon points="1110.4,738.1 1115.4,744.9 1115.4,734.9 1110.4,728.1" fill="#8a74b0" fill-opacity="0.7"/>
<polygon points="1115.4,744.9 1120.4,751.7 1120.4,741.7 1115.4,734.9" fill="#78b0e6" fill-opacity="0.6"/>
<polygon points="1120.4,751.7 1125.4,758.5 1125.4,748.6 1120.4,741.7" fill="#8a74b0" fill-opacity="0.7"/>
<polygon points="1125.4,758.5 1130.5,765.4 1130.5,755.4 1125.4,748.6" fill="#78b0e6" fill-opacity="0.6"/>
<polygon points="1130.5,765.4 1135.5,772.2 1135.5,762.2 1130.5,755.4" fill="#8a74b0" fill-opacity="0.7"/>
<polygon points="1135.5,772.2 1140.5,779.0 1140.5,769.0 1135.5,762.2" fill="#78b0e6" fill-opacity="0.6"/>
<polygon points="893.3,847.5 904.6,844.3 904.6,834.3 893.3,837.5" fill="#8a74b0" fill-opacity="0.7"/>
<polygon points="904.6,844.3 915.9,841.2 915.9,831.2 904.6,834.3" fill="#78b0e6" fill-opacity="0.6"/>
<polygon points="915.9,841.2 927.1,838.1 927.1,828.1 915.9,831.2" fill="#8a74b0" fill-opacity="0.7"/>
<polygon points="927.1,838.1 938.4,835.0 938.4,825.0 927.1,828.1" fill="#78b0e6" fill-opacity="0.6"/>
<polygon points="938.4,835.0 949.6,831.9 949.6,821.9 938.4,825.0" fill="#8a74b0" fill-opacity="0.7"/>
<polygon points="949.6,831.9 960.9,828.8 960.9,818.8 949.6,821.9" fill="#78b0e6" fill-opacity="0.6"/>
<polygon points="960.9,828.8 972.1,825.6 972.1,815.6 960.9,818.8" fill="#8a74b0" fill-opacity="0.7"/>
<polygon points="972.1,825.6 983.3,822.5 983.3,812.5 972.1,815.6" fill="#78b0e6" fill-opacity="0.6"/>
<polygon points="983.3,822.5 994.6,819.4 994.6,809.4 983.3,812.5" fill="#8a74b0" fill-opacity="0.7"/>
<polygon points="994.6,819.4 1005.8,816.3 1005.8,806.3 994.6,809.4" fill="#78b0e6" fill-opacity="0.6"/>
<polygon points="1005.8,816.3 1017.1,813.2 1017.1,803.2 1005.8,806.3" fill="#8a74b0" fill-opacity="0.7"/>
<polygon points="1017.1,813.2 1028.3,810.1 1028.3,800.1 1017.1,803.2" fill="#78b0e6" fill-opacity="0.6"/>
<polygon points="1028.3,810.1 1039.5,807.0 1039.5,797.0 1028.3,800.1" fill="#8a74b0" fill-opacity="0.7"/>
<polygon points="1039.5,807.0 1050.7,803.9 1050.7,793.9 1039.5,797.0" fill="#78b0e6" fill-opacity="0.6"/>
<polygon points="1050.7,803.9 1062.0,800.8 1062.0,790.8 1050.7,793.9" fill="#8a74b0" fill-opacity="0.7"/>
<polygon points="1062.0,800.8 1073.2,797.6 1073.2,787.6 1062.0,790.8" fill="#78b0e6" fill-opacity="0.6"/>
<polygon points="1073.2,797.6 1084.4,794.5 1084.4,784.5 1073.2,787.6" fill="#8a74b0" fill-opacity="0.7"/>
<polygon points="1084.4,794.5 1095.6,791.4 1095.6,781.4 1084.4,784.5" fill="#78b0e6" fill-opacity="0.6"/>
<polygon points="1095.6,791.4 1106.8,788.3 1106.8,778.3 1095.6,781.4" fill="#8a74b0" fill-opacity="0.7"/>
<polygon points="1106.8,788.3 1118.0,785.2 1118.0,775.2 1106.8,778.3" fill="#78b0e6" fill-opacity="0.6"/>
<polygon points="1118.0,785.2 1129.3,782.1 1129.3,772.1 1118.0,775.2" fill="#8a74b0" fill-opacity="0.7"/>
<polygon points="1129.3,782.1 1140.5,779.0 1140.5,769.0 1129.3,772.1" fill="#78b0e6" fill-opacity="0.6"/>
<polygon points="511.9,327.3 760.1,260.1 1140.5,779.0 893.3,847.5" fill="#1f64d8" fill-opacity="0.1"/>
<polygon points="511.9,317.8 760.1,250.6 1140.5,769.0 893.3,837.5" fill="#1466e0" fill-opacity="0.62" stroke="#1a78ff" stroke-opacity="0.9" stroke-width="1"/>
<path d="M893.3 847.5L511.9 327.3M1140.5 779.0L893.3 847.5M760.1 260.1L1140.5 779.0M893.3 837.5L893.3 847.5M1140.5 769.0L1140.5 779.0" stroke="#1a78ff" stroke-opacity="0.8" stroke-width="1" fill="none"/>
<polygon points="511.9,296.8 760.1,229.6 760.1,221.6 511.9,288.8" fill="#3a8cff" fill-opacity="0.7"/>
<polygon points="760.1,229.6 1140.5,749.0 1140.5,674.5 760.1,221.6" fill="#1a64e0" fill-opacity="0.5"/>
<polygon points="893.3,817.5 511.9,296.8 511.9,288.8 893.3,743.0" fill="#1a64e0" fill-opacity="0.5"/>
<polygon points="1140.5,749.0 893.3,817.5 893.3,743.0 1140.5,674.5" fill="#1a64e0" fill-opacity="0.5"/>
<polygon points="511.9,296.8 516.9,303.7 516.9,294.8 511.9,288.8" fill="#2a5ab8" fill-opacity="0.35"/>
<polygon points="516.9,303.7 521.9,310.5 521.9,300.8 516.9,294.8" fill="#3a8af0" fill-opacity="0.25"/>
<polygon points="521.9,310.5 526.9,317.4 526.9,306.7 521.9,300.8" fill="#2a5ab8" fill-opacity="0.35"/>
<polygon points="526.9,317.4 532.0,324.2 532.0,312.7 526.9,306.7" fill="#3a8af0" fill-opacity="0.25"/>
<polygon points="532.0,324.2 537.0,331.1 537.0,318.7 532.0,312.7" fill="#2a5ab8" fill-opacity="0.35"/>
<polygon points="537.0,331.1 542.0,337.9 542.0,324.7 537.0,318.7" fill="#3a8af0" fill-opacity="0.25"/>
<polygon points="542.0,337.9 547.0,344.8 547.0,330.7 542.0,324.7" fill="#2a5ab8" fill-opacity="0.35"/>
<polygon points="547.0,344.8 552.0,351.6 552.0,336.6 547.0,330.7" fill="#3a8af0" fill-opacity="0.25"/>
<polygon points="552.0,351.6 557.1,358.5 557.1,342.6 552.0,336.6" fill="#2a5ab8" fill-opacity="0.35"/>
<polygon points="557.1,358.5 562.1,365.3 562.1,348.6 557.1,342.6" fill="#3a8af0" fill-opacity="0.25"/>
<polygon points="562.1,365.3 567.1,372.2 567.1,354.6 562.1,348.6" fill="#2a5ab8" fill-opacity="0.35"/>
<polygon points="567.1,372.2 572.1,379.1 572.1,360.6 567.1,354.6" fill="#3a8af0" fill-opacity="0.25"/>
<polygon points="572.1,379.1 577.1,385.9 577.1,366.5 572.1,360.6" fill="#2a5ab8" fill-opacity="0.35"/>
<polygon points="577.1,385.9 582.2,392.8 582.2,372.5 577.1,366.5" fill="#3a8af0" fill-opacity="0.25"/>
<polygon points="582.2,392.8 587.2,399.6 587.2,378.5 582.2,372.5" fill="#2a5ab8" fill-opacity="0.35"/>
<polygon points="587.2,399.6 592.2,406.5 592.2,384.5 587.2,378.5" fill="#3a8af0" fill-opacity="0.25"/>
<polygon points="592.2,406.5 597.2,413.3 597.2,390.4 592.2,384.5" fill="#2a5ab8" fill-opacity="0.35"/>
<polygon points="597.2,413.3 602.2,420.2 602.2,396.4 597.2,390.4" fill="#3a8af0" fill-opacity="0.25"/>
<polygon points="602.2,420.2 607.3,427.0 607.3,402.4 602.2,396.4" fill="#2a5ab8" fill-opacity="0.35"/>
<polygon points="607.3,427.0 612.3,433.9 612.3,408.4 607.3,402.4" fill="#3a8af0" fill-opacity="0.25"/>
<polygon points="612.3,433.9 617.3,440.7 617.3,414.4 612.3,408.4" fill="#2a5ab8" fill-opacity="0.35"/>
<polygon points="617.3,440.7 622.3,447.6 622.3,420.3 617.3,414.4" fill="#3a8af0" fill-opacity="0.25"/>
<polygon points="622.3,447.6 627.4,454.4 627.4,426.3 622.3,420.3" fill="#2a5ab8" fill-opacity="0.35"/>
<polygon points="627.4,454.4 632.4,461.3 632.4,432.3 627.4,426.3" fill="#3a8af0" fill-opacity="0.25"/>
<polygon points="632.4,461.3 637.4,468.1 637.4,438.3 632.4,432.3" fill="#2a5ab8" fill-opacity="0.35"/>
<polygon points="637.4,468.1 642.4,475.0 642.4,444.2 637.4,438.3" fill="#3a8af0" fill-opacity="0.25"/>
<polygon points="642.4,475.0 647.4,481.8 647.4,450.2 642.4,444.2" fill="#2a5ab8" fill-opacity="0.35"/>
<polygon points="647.4,481.8 652.5,488.7 652.5,456.2 647.4,450.2" fill="#3a8af0" fill-opacity="0.25"/>
<polygon points="652.5,488.7 657.5,495.5 657.5,462.2 652.5,456.2" fill="#2a5ab8" fill-opacity="0.35"/>
<polygon points="657.5,495.5 662.5,502.4 662.5,468.1 657.5,462.2" fill="#3a8af0" fill-opacity="0.25"/>
<polygon points="662.5,502.4 667.5,509.2 667.5,474.1 662.5,468.1" fill="#2a5ab8" fill-opacity="0.35"/>
<polygon points="667.5,509.2 672.5,516.1 672.5,480.1 667.5,474.1" fill="#3a8af0" fill-opacity="0.25"/>
<polygon points="672.5,516.1 677.5,522.9 677.5,486.1 672.5,480.1" fill="#2a5ab8" fill-opacity="0.35"/>
<polygon points="677.5,522.9 682.6,529.8 682.6,492.0 677.5,486.1" fill="#3a8af0" fill-opacity="0.25"/>
<polygon points="682.6,529.8 687.6,536.6 687.6,498.0 682.6,492.0" fill="#2a5ab8" fill-opacity="0.35"/>
<polygon points="687.6,536.6 692.6,543.5 692.6,504.0 687.6,498.0" fill="#3a8af0" fill-opacity="0.25"/>
<polygon points="692.6,543.5 697.6,550.3 697.6,510.0 692.6,504.0" fill="#2a5ab8" fill-opacity="0.35"/>
<polygon points="697.6,550.3 702.6,557.2 702.6,515.9 697.6,510.0" fill="#3a8af0" fill-opacity="0.25"/>
<polygon points="702.6,557.2 707.7,564.0 707.7,521.9 702.6,515.9" fill="#2a5ab8" fill-opacity="0.35"/>
<polygon points="707.7,564.0 712.7,570.9 712.7,527.9 707.7,521.9" fill="#3a8af0" fill-opacity="0.25"/>
<polygon points="712.7,570.9 717.7,577.8 717.7,533.9 712.7,527.9" fill="#2a5ab8" fill-opacity="0.35"/>
<polygon points="717.7,577.8 722.7,584.6 722.7,539.9 717.7,533.9" fill="#3a8af0" fill-opacity="0.25"/>
<polygon points="722.7,584.6 727.7,591.5 727.7,545.8 722.7,539.9" fill="#2a5ab8" fill-opacity="0.35"/>
<polygon points="727.7,591.5 732.8,598.3 732.8,551.8 727.7,545.8" fill="#3a8af0" fill-opacity="0.25"/>
<polygon points="732.8,598.3 737.8,605.2 737.8,557.8 732.8,551.8" fill="#2a5ab8" fill-opacity="0.35"/>
<polygon points="737.8,605.2 742.8,612.0 742.8,563.8 737.8,557.8" fill="#3a8af0" fill-opacity="0.25"/>
<polygon points="742.8,612.0 747.8,618.9 747.8,569.7 742.8,563.8" fill="#2a5ab8" fill-opacity="0.35"/>
<polygon points="747.8,618.9 752.8,625.7 752.8,575.7 747.8,569.7" fill="#3a8af0" fill-opacity="0.25"/>
<polygon points="752.8,625.7 757.9,632.6 757.9,581.7 752.8,575.7" fill="#2a5ab8" fill-opacity="0.35"/>
<polygon points="757.9,632.6 762.9,639.4 762.9,587.7 757.9,581.7" fill="#3a8af0" fill-opacity="0.25"/>
<polygon points="762.9,639.4 767.9,646.2 767.9,593.6 762.9,587.7" fill="#2a5ab8" fill-opacity="0.35"/>
<polygon points="767.9,646.2 772.9,653.1 772.9,599.6 767.9,593.6" fill="#3a8af0" fill-opacity="0.25"/>
<polygon points="772.9,653.1 777.9,659.9 777.9,605.6 772.9,599.6" fill="#2a5ab8" fill-opacity="0.35"/>
<polygon points="777.9,659.9 782.9,666.8 782.9,611.5 777.9,605.6" fill="#3a8af0" fill-opacity="0.25"/>
<polygon points="782.9,666.8 788.0,673.6 788.0,617.5 782.9,611.5" fill="#2a5ab8" fill-opacity="0.35"/>
<polygon points="788.0,673.6 793.0,680.5 793.0,623.5 788.0,617.5" fill="#3a8af0" fill-opacity="0.25"/>
<polygon points="793.0,680.5 798.0,687.3 798.0,629.5 793.0,623.5" fill="#2a5ab8" fill-opacity="0.35"/>
<polygon points="798.0,687.3 803.0,694.2 803.0,635.4 798.0,629.5" fill="#3a8af0" fill-opacity="0.25"/>
<polygon points="803.0,694.2 808.0,701.0 808.0,641.4 803.0,635.4" fill="#2a5ab8" fill-opacity="0.35"/>
<polygon points="808.0,701.0 813.1,707.9 813.1,647.4 808.0,641.4" fill="#3a8af0" fill-opacity="0.25"/>
<polygon points="813.1,707.9 818.1,714.7 818.1,653.4 813.1,647.4" fill="#2a5ab8" fill-opacity="0.35"/>
<polygon points="818.1,714.7 823.1,721.6 823.1,659.3 818.1,653.4" fill="#3a8af0" fill-opacity="0.25"/>
<polygon points="823.1,721.6 828.1,728.4 828.1,665.3 823.1,659.3" fill="#2a5ab8" fill-opacity="0.35"/>
<polygon points="828.1,728.4 833.1,735.3 833.1,671.3 828.1,665.3" fill="#3a8af0" fill-opacity="0.25"/>
<polygon points="833.1,735.3 838.1,742.1 838.1,677.3 833.1,671.3" fill="#2a5ab8" fill-opacity="0.35"/>
<polygon points="838.1,742.1 843.2,749.0 843.2,683.2 838.1,677.3" fill="#3a8af0" fill-opacity="0.25"/>
<polygon points="843.2,749.0 848.2,755.8 848.2,689.2 843.2,683.2" fill="#2a5ab8" fill-opacity="0.35"/>
<polygon points="848.2,755.8 853.2,762.7 853.2,695.2 848.2,689.2" fill="#3a8af0" fill-opacity="0.25"/>
<polygon points="853.2,762.7 858.2,769.5 858.2,701.2 853.2,695.2" fill="#2a5ab8" fill-opacity="0.35"/>
<polygon points="858.2,769.5 863.2,776.4 863.2,707.1 858.2,701.2" fill="#3a8af0" fill-opacity="0.25"/>
<polygon points="863.2,776.4 868.2,783.2 868.2,713.1 863.2,707.1" fill="#2a5ab8" fill-opacity="0.35"/>
<polygon points="868.2,783.2 873.3,790.1 873.3,719.1 868.2,713.1" fill="#3a8af0" fill-opacity="0.25"/>
<polygon points="873.3,790.1 878.3,796.9 878.3,725.0 873.3,719.1" fill="#2a5ab8" fill-opacity="0.35"/>
<polygon points="878.3,796.9 883.3,803.8 883.3,731.0 878.3,725.0" fill="#3a8af0" fill-opacity="0.25"/>
<polygon points="883.3,803.8 888.3,810.6 888.3,737.0 883.3,731.0" fill="#2a5ab8" fill-opacity="0.35"/>
<polygon points="888.3,810.6 893.3,817.5 893.3,743.0 888.3,737.0" fill="#3a8af0" fill-opacity="0.25"/>
<polygon points="760.1,229.6 765.1,236.5 765.1,227.6 760.1,221.6" fill="#2a5ab8" fill-opacity="0.35"/>
<polygon points="765.1,236.5 770.1,243.3 770.1,233.6 765.1,227.6" fill="#3a8af0" fill-opacity="0.25"/>
<polygon points="770.1,243.3 775.1,250.2 775.1,239.5 770.1,233.6" fill="#2a5ab8" fill-opacity="0.35"/>
<polygon points="775.1,250.2 780.1,257.0 780.1,245.5 775.1,239.5" fill="#3a8af0" fill-opacity="0.25"/>
<polygon points="780.1,257.0 785.1,263.8 785.1,251.5 780.1,245.5" fill="#2a5ab8" fill-opacity="0.35"/>
<polygon points="785.1,263.8 790.1,270.7 790.1,257.4 785.1,251.5" fill="#3a8af0" fill-opacity="0.25"/>
<polygon points="790.1,270.7 795.1,277.5 795.1,263.4 790.1,257.4" fill="#2a5ab8" fill-opacity="0.35"/>
<polygon points="795.1,277.5 800.1,284.3 800.1,269.3 795.1,263.4" fill="#3a8af0" fill-opacity="0.25"/>
<polygon points="800.1,284.3 805.1,291.2 805.1,275.3 800.1,269.3" fill="#2a5ab8" fill-opacity="0.35"/>
<polygon points="805.1,291.2 810.1,298.0 810.1,281.3 805.1,275.3" fill="#3a8af0" fill-opacity="0.25"/>
<polygon points="810.1,298.0 815.2,304.9 815.2,287.2 810.1,281.3" fill="#2a5ab8" fill-opacity="0.35"/>
<polygon points="815.2,304.9 820.2,311.7 820.2,293.2 815.2,287.2" fill="#3a8af0" fill-opacity="0.25"/>
<polygon points="820.2,311.7 825.2,318.5 825.2,299.1 820.2,293.2" fill="#2a5ab8" fill-opacity="0.35"/>
<polygon points="825.2,318.5 830.2,325.4 830.2,305.1 825.2,299.1" fill="#3a8af0" fill-opacity="0.25"/>
<polygon points="830.2,325.4 835.2,332.2 835.2,311.1 830.2,305.1" fill="#2a5ab8" fill-opacity="0.35"/>
<polygon points="835.2,332.2 840.2,339.0 840.2,317.0 835.2,311.1" fill="#3a8af0" fill-opacity="0.25"/>
<polygon points="840.2,339.0 845.2,345.9 845.2,323.0 840.2,317.0" fill="#2a5ab8" fill-opacity="0.35"/>
<polygon points="845.2,345.9 850.2,352.7 850.2,328.9 845.2,323.0" fill="#3a8af0" fill-opacity="0.25"/>
<polygon points="850.2,352.7 855.2,359.5 855.2,334.9 850.2,328.9" fill="#2a5ab8" fill-opacity="0.35"/>
<polygon points="855.2,359.5 860.2,366.4 860.2,340.9 855.2,334.9" fill="#3a8af0" fill-opacity="0.25"/>
<polygon points="860.2,366.4 865.2,373.2 865.2,346.8 860.2,340.9" fill="#2a5ab8" fill-opacity="0.35"/>
<polygon points="865.2,373.2 870.2,380.0 870.2,352.8 865.2,346.8" fill="#3a8af0" fill-opacity="0.25"/>
<polygon points="870.2,380.0 875.2,386.9 875.2,358.8 870.2,352.8" fill="#2a5ab8" fill-opacity="0.35"/>
<polygon points="875.2,386.9 880.2,393.7 880.2,364.7 875.2,358.8" fill="#3a8af0" fill-opacity="0.25"/>
<polygon points="880.2,393.7 885.2,400.5 885.2,370.7 880.2,364.7" fill="#2a5ab8" fill-opacity="0.35"/>
<polygon points="885.2,400.5 890.2,407.4 890.2,376.6 885.2,370.7" fill="#3a8af0" fill-opacity="0.25"/>
<polygon points="890.2,407.4 895.3,414.2 895.3,382.6 890.2,376.6" fill="#2a5ab8" fill-opacity="0.35"/>
<polygon points="895.3,414.2 900.3,421.0 900.3,388.5 895.3,382.6" fill="#3a8af0" fill-opacity="0.25"/>
<polygon points="900.3,421.0 905.3,427.9 905.3,394.5 900.3,388.5" fill="#2a5ab8" fill-opacity="0.35"/>
<polygon points="905.3,427.9 910.3,434.7 910.3,400.5 905.3,394.5" fill="#3a8af0" fill-opacity="0.25"/>
<polygon points="910.3,434.7 915.3,441.6 915.3,406.4 910.3,400.5" fill="#2a5ab8" fill-opacity="0.35"/>
<polygon points="915.3,441.6 920.3,448.4 920.3,412.4 915.3,406.4" fill="#3a8af0" fill-opacity="0.25"/>
<polygon points="920.3,448.4 925.3,455.2 925.3,418.3 920.3,412.4" fill="#2a5ab8" fill-opacity="0.35"/>
<polygon points="925.3,455.2 930.3,462.1 930.3,424.3 925.3,418.3" fill="#3a8af0" fill-opacity="0.25"/>
<polygon points="930.3,462.1 935.3,468.9 935.3,430.3 930.3,424.3" fill="#2a5ab8" fill-opacity="0.35"/>
<polygon points="935.3,468.9 940.3,475.7 940.3,436.2 935.3,430.3" fill="#3a8af0" fill-opacity="0.25"/>
<polygon points="940.3,475.7 945.3,482.6 945.3,442.2 940.3,436.2" fill="#2a5ab8" fill-opacity="0.35"/>
<polygon points="945.3,482.6 950.3,489.4 950.3,448.1 945.3,442.2" fill="#3a8af0" fill-opacity="0.25"/>
<polygon points="950.3,489.4 955.3,496.2 955.3,454.1 950.3,448.1" fill="#2a5ab8" fill-opacity="0.35"/>
<polygon points="955.3,496.2 960.3,503.1 960.3,460.1 955.3,454.1" fill="#3a8af0" fill-opacity="0.25"/>
<polygon points="960.3,503.1 965.3,509.9 965.3,466.0 960.3,460.1" fill="#2a5ab8" fill-opacity="0.35"/>
<polygon points="965.3,509.9 970.3,516.7 970.3,472.0 965.3,466.0" fill="#3a8af0" fill-opacity="0.25"/>
<polygon points="970.3,516.7 975.3,523.6 975.3,477.9 970.3,472.0" fill="#2a5ab8" fill-opacity="0.35"/>
<polygon points="975.3,523.6 980.3,530.4 980.3,483.9 975.3,477.9" fill="#3a8af0" fill-opacity="0.25"/>
<polygon points="980.3,530.4 985.3,537.2 985.3,489.8 980.3,483.9" fill="#2a5ab8" fill-opacity="0.35"/>
<polygon points="985.3,537.2 990.4,544.1 990.4,495.8 985.3,489.8" fill="#3a8af0" fill-opacity="0.25"/>
<polygon points="990.4,544.1 995.4,550.9 995.4,501.8 990.4,495.8" fill="#2a5ab8" fill-opacity="0.35"/>
<polygon points="995.4,550.9 1000.4,557.7 1000.4,507.7 995.4,501.8" fill="#3a8af0" fill-opacity="0.25"/>
<polygon points="1000.4,557.7 1005.4,564.6 1005.4,513.7 1000.4,507.7" fill="#2a5ab8" fill-opacity="0.35"/>
<polygon points="1005.4,564.6 1010.4,571.4 1010.4,519.6 1005.4,513.7" fill="#3a8af0" fill-opacity="0.25"/>
<polygon points="1010.4,571.4 1015.4,578.2 1015.4,525.6 1010.4,519.6" fill="#2a5ab8" fill-opacity="0.35"/>
<polygon points="1015.4,578.2 1020.4,585.1 1020.4,531.6 1015.4,525.6" fill="#3a8af0" fill-opacity="0.25"/>
<polygon points="1020.4,585.1 1025.4,591.9 1025.4,537.5 1020.4,531.6" fill="#2a5ab8" fill-opacity="0.35"/>
<polygon points="1025.4,591.9 1030.4,598.7 1030.4,543.5 1025.4,537.5" fill="#3a8af0" fill-opacity="0.25"/>
<polygon points="1030.4,598.7 1035.4,605.6 1035.4,549.4 1030.4,543.5" fill="#2a5ab8" fill-opacity="0.35"/>
<polygon points="1035.4,605.6 1040.4,612.4 1040.4,555.4 1035.4,549.4" fill="#3a8af0" fill-opacity="0.25"/>
<polygon points="1040.4,612.4 1045.4,619.2 1045.4,561.3 1040.4,555.4" fill="#2a5ab8" fill-opacity="0.35"/>
<polygon points="1045.4,619.2 1050.4,626.0 1050.4,567.3 1045.4,561.3" fill="#3a8af0" fill-opacity="0.25"/>
<polygon points="1050.4,626.0 1055.4,632.9 1055.4,573.3 1050.4,567.3" fill="#2a5ab8" fill-opacity="0.35"/>
<polygon points="1055.4,632.9 1060.4,639.7 1060.4,579.2 1055.4,573.3" fill="#3a8af0" fill-opacity="0.25"/>
<polygon points="1060.4,639.7 1065.4,646.5 1065.4,585.2 1060.4,579.2" fill="#2a5ab8" fill-opacity="0.35"/>
<polygon points="1065.4,646.5 1070.4,653.4 1070.4,591.1 1065.4,585.2" fill="#3a8af0" fill-opacity="0.25"/>
<polygon points="1070.4,653.4 1075.4,660.2 1075.4,597.1 1070.4,591.1" fill="#2a5ab8" fill-opacity="0.35"/>
<polygon points="1075.4,660.2 1080.4,667.0 1080.4,603.0 1075.4,597.1" fill="#3a8af0" fill-opacity="0.25"/>
<polygon points="1080.4,667.0 1085.4,673.9 1085.4,609.0 1080.4,603.0" fill="#2a5ab8" fill-opacity="0.35"/>
<polygon points="1085.4,673.9 1090.4,680.7 1090.4,615.0 1085.4,609.0" fill="#3a8af0" fill-opacity="0.25"/>
<polygon points="1090.4,680.7 1095.4,687.5 1095.4,620.9 1090.4,615.0" fill="#2a5ab8" fill-opacity="0.35"/>
<polygon points="1095.4,687.5 1100.4,694.4 1100.4,626.9 1095.4,620.9" fill="#3a8af0" fill-opacity="0.25"/>
<polygon points="1100.4,694.4 1105.4,701.2 1105.4,632.8 1100.4,626.9" fill="#2a5ab8" fill-opacity="0.35"/>
<polygon points="1105.4,701.2 1110.4,708.0 1110.4,638.8 1105.4,632.8" fill="#3a8af0" fill-opacity="0.25"/>
<polygon points="1110.4,708.0 1115.4,714.9 1115.4,644.7 1110.4,638.8" fill="#2a5ab8" fill-opacity="0.35"/>
<polygon points="1115.4,714.9 1120.4,721.7 1120.4,650.7 1115.4,644.7" fill="#3a8af0" fill-opacity="0.25"/>
<polygon points="1120.4,721.7 1125.4,728.5 1125.4,656.6 1120.4,650.7" fill="#2a5ab8" fill-opacity="0.35"/>
<polygon points="1125.4,728.5 1130.5,735.3 1130.5,662.6 1125.4,656.6" fill="#3a8af0" fill-opacity="0.25"/>
<polygon points="1130.5,735.3 1135.5,742.2 1135.5,668.6 1130.5,662.6" fill="#2a5ab8" fill-opacity="0.35"/>
<polygon points="1135.5,742.2 1140.5,749.0 1140.5,674.5 1135.5,668.6" fill="#3a8af0" fill-opacity="0.25"/>
<polygon points="893.3,817.5 904.6,814.3 904.6,739.8 893.3,743.0" fill="#2a5ab8" fill-opacity="0.35"/>
<polygon points="904.6,814.3 915.9,811.2 915.9,736.7 904.6,739.8" fill="#3a8af0" fill-opacity="0.25"/>
<polygon points="915.9,811.2 927.1,808.1 927.1,733.6 915.9,736.7" fill="#2a5ab8" fill-opacity="0.35"/>
<polygon points="927.1,808.1 938.4,805.0 938.4,730.5 927.1,733.6" fill="#3a8af0" fill-opacity="0.25"/>
<polygon points="938.4,805.0 949.6,801.9 949.6,727.4 938.4,730.5" fill="#2a5ab8" fill-opacity="0.35"/>
<polygon points="949.6,801.9 960.9,798.8 960.9,724.3 949.6,727.4" fill="#3a8af0" fill-opacity="0.25"/>
<polygon points="960.9,798.8 972.1,795.6 972.1,721.1 960.9,724.3" fill="#2a5ab8" fill-opacity="0.35"/>
<polygon points="972.1,795.6 983.3,792.5 983.3,718.0 972.1,721.1" fill="#3a8af0" fill-opacity="0.25"/>
<polygon points="983.3,792.5 994.6,789.4 994.6,714.9 983.3,718.0" fill="#2a5ab8" fill-opacity="0.35"/>
<polygon points="994.6,789.4 1005.8,786.3 1005.8,711.8 994.6,714.9" fill="#3a8af0" fill-opacity="0.25"/>
<polygon points="1005.8,786.3 1017.1,783.2 1017.1,708.7 1005.8,711.8" fill="#2a5ab8" fill-opacity="0.35"/>
<polygon points="1017.1,783.2 1028.3,780.1 1028.3,705.6 1017.1,708.7" fill="#3a8af0" fill-opacity="0.25"/>
<polygon points="1028.3,780.1 1039.5,777.0 1039.5,702.5 1028.3,705.6" fill="#2a5ab8" fill-opacity="0.35"/>
<polygon points="1039.5,777.0 1050.7,773.9 1050.7,699.4 1039.5,702.5" fill="#3a8af0" fill-opacity="0.25"/>
<polygon points="1050.7,773.9 1062.0,770.8 1062.0,696.3 1050.7,699.4" fill="#2a5ab8" fill-opacity="0.35"/>
<polygon points="1062.0,770.8 1073.2,767.6 1073.2,693.1 1062.0,696.3" fill="#3a8af0" fill-opacity="0.25"/>
<polygon points="1073.2,767.6 1084.4,764.5 1084.4,690.0 1073.2,693.1" fill="#2a5ab8" fill-opacity="0.35"/>
<polygon points="1084.4,764.5 1095.6,761.4 1095.6,686.9 1084.4,690.0" fill="#3a8af0" fill-opacity="0.25"/>
<polygon points="1095.6,761.4 1106.8,758.3 1106.8,683.8 1095.6,686.9" fill="#2a5ab8" fill-opacity="0.35"/>
<polygon points="1106.8,758.3 1118.0,755.2 1118.0,680.7 1106.8,683.8" fill="#3a8af0" fill-opacity="0.25"/>
<polygon points="1118.0,755.2 1129.3,752.1 1129.3,677.6 1118.0,680.7" fill="#2a5ab8" fill-opacity="0.35"/>
<polygon points="1129.3,752.1 1140.5,749.0 1140.5,674.5 1129.3,677.6" fill="#3a8af0" fill-opacity="0.25"/>
<polygon points="511.9,296.8 760.1,229.6 1140.5,749.0 893.3,817.5" fill="#1a64e0" fill-opacity="0.1"/>
<polygon points="511.9,288.8 760.1,221.6 1140.5,674.5 893.3,743.0" fill="#0e5cd8" fill-opacity="0.66" stroke="#1a78ff" stroke-opacity="0.9" stroke-width="1"/>
<path d="M893.3 817.5L511.9 296.8M1140.5 749.0L893.3 817.5M760.1 229.6L1140.5 749.0M893.3 743.0L893.3 817.5M1140.5 674.5L1140.5 749.0" stroke="#1a78ff" stroke-opacity="0.8" stroke-width="1" fill="none"/>
<text x="0" y="0" transform="translate(645,315) rotate(50.5) scale(1,-1)" font-family="Liberation Sans" font-size="10.5" fill="#3a92ff" fill-opacity="0.7" letter-spacing="0.3">t=+20.0°C  Δt=+20.0°C</text>
<polygon points="839.7,447.2 1016.0,831.0 661.5,496.0 803.8,540.6" fill="#0a74fa" fill-opacity="0.92"/>
<polygon points="661.5,496.0 692.5,505.5 790.0,618.0" fill="#0656c8" fill-opacity="0.38"/>
<polygon points="511.9,346.8 760.1,279.6 1140.5,799.0 893.3,867.5" fill="none" stroke="#2626e6" stroke-width="1.1"/><path d="M711.3 415.9L1017.1 833.2" stroke="#1a3aa0" stroke-opacity="0.4" stroke-width="1" stroke-dasharray="6 6"/><circle cx="511.9" cy="346.8" r="3" fill="#1010f0"/><circle cx="1140.5" cy="799.0" r="3" fill="#1010f0"/><circle cx="893.3" cy="867.5" r="3" fill="#1010f0"/><circle cx="636.1" cy="313.2" r="3.5" fill="#1515e0" stroke="#c8d0ff" stroke-width="1"/><circle cx="1017.1" cy="833.2" r="3.2" fill="#1010f0"/><path d="M760.0 278.5L764.5 286.0L755.5 286.0Z" fill="#c8d0ff" fill-opacity="0.5" stroke="#2a2ae8" stroke-width="1.3"/><path d="M951.0 537.5L955.5 545.0L946.5 545.0Z" fill="#c8d0ff" fill-opacity="0.5" stroke="#2a2ae8" stroke-width="1.3"/><path d="M702.5 604.5L707.0 612.0L698.0 612.0Z" fill="#c8d0ff" fill-opacity="0.5" stroke="#2a2ae8" stroke-width="1.3"/><path d="M833.5 516.3L834.8 519.2L837.7 520.5L834.8 521.8L833.5 524.7L832.2 521.8L829.3 520.5L832.2 519.2Z" fill="#3020e0" stroke="#d8d0ff" stroke-width="1" stroke-linejoin="round"/><path d="M826.5 570.0999999999999L827.8 573.0L830.7 574.3L827.8 575.5999999999999L826.5 578.5L825.2 575.5999999999999L822.3 574.3L825.2 573.0Z" fill="#3020e0" stroke="#d8d0ff" stroke-width="1" stroke-linejoin="round"/><path d="M563 622H574M568.5 616.5V627.5" stroke="#e85a5a" stroke-width="1"/><path d="M1012.5 838L1088 940" stroke="#f00000" stroke-width="3"/><text x="0" y="0" transform="translate(1028,831) rotate(51) scale(1,-1)" font-family="Liberation Sans" font-size="10.5" fill="#5a8af0" letter-spacing="0.3">t2=+20.0°C  Δt2=+160.0°C</text><path d="M414.5 591L418.5 606.5L416 607L416 619L414.5 619Z" fill="#e01818"/><path d="M414.5 617.5L427.5 613.5L427 611.3L452.8 609L430.3 619.5L429.3 617L414.5 620Z" fill="#3a3ae0" stroke="#1a1a9a" stroke-width="0.6"/><path d="M414.5 619.5L419.5 626.5L424 626L430.5 643.3L416 630.6L417.5 628.5L414.5 622Z" fill="#18c818" stroke="#0a8a0a" stroke-width="0.6"/><text x="454.5" y="606" font-family="Liberation Sans" font-weight="bold" font-size="14.5" fill="#1038e8">Y</text><text x="432.5" y="643" font-family="Liberation Sans" font-weight="bold" font-size="14.5" fill="#20b020">X</text>
</svg></div>
<!-- VIEWPORT 2 -->
<div id="vp2"><svg class="a" style="left:1206px;top:73px" width="784" height="867" viewBox="1206 73 784 867">
<rect x="1206" y="73" width="784" height="867" fill="#eff2f9"/>
<path d="M418.9 333.6L897.2 969.0M441.3 328.2L919.6 963.4M463.6 322.7L942.0 957.9M486.0 317.2L964.4 952.4M508.3 311.8L986.8 946.9M530.7 306.3L1009.3 941.3M553.0 300.8L1031.7 935.8M575.4 295.4L1054.1 930.3M597.7 289.9L1076.5 924.8M620.1 284.5L1098.9 919.3M642.4 279.0L1121.3 913.8M664.7 273.5L1143.7 908.2M687.1 268.1L1166.1 902.7M709.4 262.6L1188.5 897.2M731.7 257.2L1210.9 891.7M754.0 251.7L1233.3 886.2M776.4 246.2L1255.7 880.7M798.7 240.8L1278.1 875.2M821.0 235.3L1300.5 869.6M843.3 229.9L1322.9 864.1M865.6 224.4L1345.3 858.6M888.0 219.0L1367.6 853.1M910.3 213.5L1390.0 847.6M932.6 208.1L1412.4 842.1M954.9 202.6L1434.8 836.6M977.2 197.1L1457.1 831.1M999.5 191.7L1479.5 825.6M1021.8 186.2L1501.9 820.1M1044.1 180.8L1524.2 814.6M1066.4 175.3L1546.6 809.0M1088.7 169.9L1569.0 803.5M418.9 333.6L1088.7 169.9M428.4 346.3L1098.2 182.5M438.0 358.9L1107.8 195.1M447.5 371.6L1117.4 207.8M457.0 384.3L1126.9 220.4M466.6 396.9L1136.5 233.0M476.1 409.6L1146.1 245.7M485.6 422.3L1155.7 258.3M495.2 434.9L1165.2 270.9M504.7 447.6L1174.8 283.6M514.2 460.3L1184.4 296.2M523.8 472.9L1194.0 308.8M533.3 485.6L1203.6 321.5M542.9 498.3L1213.2 334.1M552.4 511.0L1222.7 346.8M562.0 523.7L1232.3 359.4M571.5 536.4L1241.9 372.1M581.1 549.0L1251.5 384.7M590.6 561.7L1261.1 397.4M600.2 574.4L1270.7 410.1M609.7 587.1L1280.3 422.7M619.3 599.8L1289.9 435.4M628.8 612.5L1299.5 448.0M638.4 625.2L1309.1 460.7M648.0 637.9L1318.7 473.4M657.5 650.6L1328.3 486.1M667.1 663.3L1337.9 498.7M676.7 676.0L1347.5 511.4M686.2 688.8L1357.1 524.1M695.8 701.5L1366.7 536.8M705.4 714.2L1376.4 549.5M715.0 726.9L1386.0 562.1M724.5 739.6L1395.6 574.8M734.1 752.4L1405.2 587.5M743.7 765.1L1414.8 600.2M753.3 777.8L1424.4 612.9M762.8 790.5L1434.1 625.6M772.4 803.3L1443.7 638.3M782.0 816.0L1453.3 651.0M791.6 828.7L1462.9 663.7M801.2 841.5L1472.6 676.4M810.8 854.2L1482.2 689.1M820.4 866.9L1491.8 701.8M830.0 879.7L1501.5 714.5M839.6 892.4L1511.1 727.2M849.1 905.2L1520.7 739.9M858.7 917.9L1530.4 752.7M868.3 930.7L1540.0 765.4M877.9 943.4L1549.7 778.1M887.5 956.2L1559.3 790.8M897.2 969.0L1569.0 803.5" stroke="#d3e0d9" stroke-width="1" fill="none"/>
<defs><linearGradient id="sg2" gradientUnits="userSpaceOnUse" x1="1385" y1="247" x2="1818" y2="818"><stop offset="0" stop-color="#bbb4a8"/><stop offset="1" stop-color="#e4dfd4"/></linearGradient></defs>
<polygon points="1184.4,296.2 1585.5,198.0 1758.7,425.5 1736.4,431.0 1871.4,608.5 1893.7,603.0 2019.4,768.1 1617.2,867.2" fill="url(#sg2)" stroke="#716945" stroke-width="0.95"/>
<path d="M1206.7 290.7L1639.6 861.7M1229.0 285.3L1661.9 856.2M1251.3 279.8L1684.3 850.7M1273.6 274.4L1706.6 845.2M1295.9 268.9L1729.0 839.7M1318.2 263.4L1751.3 834.1M1340.5 258.0L1773.7 828.6M1362.8 252.5L1796.0 823.1M1385.0 247.1L1818.4 817.6M1407.3 241.6L1840.7 812.1M1429.6 236.2L1863.1 806.6M1451.9 230.7L1885.4 801.1M1474.2 225.3L1907.8 795.6M1496.4 219.8L1930.1 790.1M1518.7 214.4L1952.4 784.6M1541.0 208.9L1974.7 779.1M1563.2 203.5L1736.4 431.0M1871.4 608.5L1997.1 773.6M1736.4 431.0L1871.4 608.5M1194.0 308.8L1595.1 210.6M1203.6 321.5L1604.7 223.2M1213.2 334.1L1614.3 235.9M1222.7 346.8L1623.9 248.5M1232.3 359.4L1633.6 261.1M1241.9 372.1L1643.2 273.8M1251.5 384.7L1652.8 286.4M1261.1 397.4L1662.4 299.0M1270.7 410.1L1672.0 311.7M1280.3 422.7L1681.6 324.3M1289.9 435.4L1691.3 337.0M1299.5 448.0L1700.9 349.6M1309.1 460.7L1710.5 362.3M1318.7 473.4L1720.1 374.9M1328.3 486.1L1729.8 387.6M1337.9 498.7L1739.4 400.2M1347.5 511.4L1749.0 412.9M1357.1 524.1L1758.7 425.5M1366.7 536.8L1746.0 443.7M1376.4 549.5L1755.7 456.3M1386.0 562.1L1765.3 469.0M1395.6 574.8L1774.9 481.7M1405.2 587.5L1784.6 494.3M1414.8 600.2L1794.2 507.0M1424.4 612.9L1803.9 519.7M1434.1 625.6L1813.5 532.4M1443.7 638.3L1823.1 545.0M1453.3 651.0L1832.8 557.7M1462.9 663.7L1842.4 570.4M1472.6 676.4L1852.1 583.1M1482.2 689.1L1861.8 595.8M1491.8 701.8L1893.7 603.0M1501.5 714.5L1903.4 615.7M1511.1 727.2L1913.0 628.3M1520.7 739.9L1922.7 641.0M1530.4 752.7L1932.4 653.7M1540.0 765.4L1942.0 666.4M1549.7 778.1L1951.7 679.1M1559.3 790.8L1961.4 691.8M1569.0 803.5L1971.0 704.5M1578.6 816.3L1980.7 717.3M1588.2 829.0L1990.4 730.0M1597.9 841.7L2000.0 742.7M1607.5 854.5L2009.7 755.4" stroke="#716945" stroke-width="0.95" fill="none"/>
<polygon points="1299.3,343.0 1544.5,283.0 1910.7,764.7 1665.0,825.2" fill="none" stroke="#6b6338" stroke-width="1.6"/>
<polygon points="1299.3,323.5 1544.5,263.5 1544.5,254.0 1299.3,314.0" fill="#3a8cff" fill-opacity="0.6"/>
<polygon points="1544.5,263.5 1910.7,744.7 1910.7,734.7 1544.5,254.0" fill="#2a84f8" fill-opacity="0.5"/>
<polygon points="1665.0,805.2 1299.3,323.5 1299.3,314.0 1665.0,795.2" fill="#2a84f8" fill-opacity="0.5"/>
<polygon points="1910.7,744.7 1665.0,805.2 1665.0,795.2 1910.7,734.7" fill="#2a84f8" fill-opacity="0.5"/>
<polygon points="1299.3,323.5 1544.5,263.5 1910.7,744.7 1665.0,805.2" fill="#2a84f8" fill-opacity="0.1"/>
<polygon points="1299.3,314.0 1544.5,254.0 1910.7,734.7 1665.0,795.2" fill="#3a84ec" fill-opacity="0.5" stroke="#1a78ff" stroke-opacity="0.9" stroke-width="1"/>
<path d="M1665.0 805.2L1299.3 323.5M1910.7 744.7L1665.0 805.2M1544.5 263.5L1910.7 744.7M1665.0 795.2L1665.0 805.2M1910.7 734.7L1910.7 744.7" stroke="#1a78ff" stroke-opacity="0.8" stroke-width="1" fill="none"/>
<polygon points="1299.3,293.0 1544.5,233.0 1544.5,225.0 1299.3,285.0" fill="#3a8cff" fill-opacity="0.6"/>
<polygon points="1544.5,233.0 1910.7,714.7 1910.7,639.2 1544.5,225.0" fill="#2080fa" fill-opacity="0.52"/>
<polygon points="1665.0,775.2 1299.3,293.0 1299.3,285.0 1665.0,699.7" fill="#2080fa" fill-opacity="0.52"/>
<polygon points="1910.7,714.7 1665.0,775.2 1665.0,699.7 1910.7,639.2" fill="#2080fa" fill-opacity="0.52"/>
<polygon points="1299.3,293.0 1544.5,233.0 1910.7,714.7 1665.0,775.2" fill="#2080fa" fill-opacity="0.1"/>
<polygon points="1299.3,285.0 1544.5,225.0 1910.7,639.2 1665.0,699.7" fill="#2f7ee8" fill-opacity="0.7" stroke="#1a78ff" stroke-opacity="0.9" stroke-width="1"/>
<path d="M1665.0 775.2L1299.3 293.0M1910.7 714.7L1665.0 775.2M1544.5 233.0L1910.7 714.7M1665.0 699.7L1665.0 775.2M1910.7 639.2L1910.7 714.7" stroke="#1a78ff" stroke-opacity="0.8" stroke-width="1" fill="none"/>
<clipPath id="bxc2"><polygon points="1299.3,285.0 1544.5,225.0 1910.7,639.2 1910.7,744.7 1665.0,805.2 1299.3,323.5"/></clipPath>
<g clip-path="url(#bxc2)">
<path d="M1206.7 290.7L1639.6 861.7M1229.0 285.3L1661.9 856.2M1251.3 279.8L1684.3 850.7M1273.6 274.4L1706.6 845.2M1295.9 268.9L1729.0 839.7M1318.2 263.4L1751.3 834.1M1340.5 258.0L1773.7 828.6M1362.8 252.5L1796.0 823.1M1385.0 247.1L1818.4 817.6M1407.3 241.6L1840.7 812.1M1429.6 236.2L1863.1 806.6M1451.9 230.7L1885.4 801.1M1474.2 225.3L1907.8 795.6M1496.4 219.8L1930.1 790.1M1518.7 214.4L1952.4 784.6M1541.0 208.9L1974.7 779.1M1563.2 203.5L1736.4 431.0M1871.4 608.5L1997.1 773.6M1736.4 431.0L1871.4 608.5M1194.0 308.8L1595.1 210.6M1203.6 321.5L1604.7 223.2M1213.2 334.1L1614.3 235.9M1222.7 346.8L1623.9 248.5M1232.3 359.4L1633.6 261.1M1241.9 372.1L1643.2 273.8M1251.5 384.7L1652.8 286.4M1261.1 397.4L1662.4 299.0M1270.7 410.1L1672.0 311.7M1280.3 422.7L1681.6 324.3M1289.9 435.4L1691.3 337.0M1299.5 448.0L1700.9 349.6M1309.1 460.7L1710.5 362.3M1318.7 473.4L1720.1 374.9M1328.3 486.1L1729.8 387.6M1337.9 498.7L1739.4 400.2M1347.5 511.4L1749.0 412.9M1357.1 524.1L1758.7 425.5M1366.7 536.8L1746.0 443.7M1376.4 549.5L1755.7 456.3M1386.0 562.1L1765.3 469.0M1395.6 574.8L1774.9 481.7M1405.2 587.5L1784.6 494.3M1414.8 600.2L1794.2 507.0M1424.4 612.9L1803.9 519.7M1434.1 625.6L1813.5 532.4M1443.7 638.3L1823.1 545.0M1453.3 651.0L1832.8 557.7M1462.9 663.7L1842.4 570.4M1472.6 676.4L1852.1 583.1M1482.2 689.1L1861.8 595.8M1491.8 701.8L1893.7 603.0M1501.5 714.5L1903.4 615.7M1511.1 727.2L1913.0 628.3M1520.7 739.9L1922.7 641.0M1530.4 752.7L1932.4 653.7M1540.0 765.4L1942.0 666.4M1549.7 778.1L1951.7 679.1M1559.3 790.8L1961.4 691.8M1569.0 803.5L1971.0 704.5M1578.6 816.3L1980.7 717.3M1588.2 829.0L1990.4 730.0M1597.9 841.7L2000.0 742.7M1607.5 854.5L2009.7 755.4"  stroke="#1e5280" stroke-opacity="0.4" stroke-width="0.95" fill="none"/>
<polygon points="1299.3,343.0 1544.5,283.0 1910.7,764.7 1665.0,825.2" fill="none" stroke="#4a5a50" stroke-opacity="0.45" stroke-width="1.2"/>
</g>
<path d="M1580.5 521.9L1787.9 794.9" stroke="#1a3a80" stroke-opacity="0.5" stroke-width="1" stroke-dasharray="6 6"/><text x="0" y="0" transform="translate(1430,311) rotate(50) scale(1,-1)" font-family="Liberation Sans" font-size="10.5" fill="#3a92ff" fill-opacity="0.7" letter-spacing="0.3">t=+20.0°C  Δt=+20.0°C</text>
<polygon points="1620.0,437.0 1786.0,793.6 1443.4,481.7 1583.8,524.3" fill="#0a74fa" fill-opacity="0.92"/>
<polygon points="1443.4,481.7 1485.0,495.7 1602.0,627.0" fill="#0656c8" fill-opacity="0.38"/>
<text x="0" y="0" transform="translate(1796,788) rotate(50) scale(1,-1)" font-family="Liberation Sans" font-size="10.5" fill="#5a8af0" letter-spacing="0.3">t2=+20.0°C  Δt2=+160.0°C</text><path d="M1206 591L1212.8 589L1212.8 586.2L1238.3 584.3L1215.3 594.5L1214 592.5L1206 594Z" fill="#3a3ae0" stroke="#1a1a9a" stroke-width="0.6"/><path d="M1206 598L1209 600.8L1215.3 616.2L1206 608Z" fill="#18c818" stroke="#0a8a0a" stroke-width="0.6"/><text x="1240" y="581" font-family="Liberation Sans" font-weight="bold" font-size="14.5" fill="#1038e8">Y</text><text x="1217.5" y="616" font-family="Liberation Sans" font-weight="bold" font-size="14.5" fill="#20b020">X</text>
</svg></div>


<!-- frames & tabs -->
<div class="a" style="left:411px;top:70px;width:2px;height:870px;background:#c6d9f5"></div>
<div class="a" style="left:413px;top:71px;width:2px;height:869px;background:#8c8c8c"></div>
<div class="a" style="left:411px;top:70px;width:786px;height:1px;background:#c6d9f5"></div>
<div class="a" style="left:413px;top:71px;width:784px;height:2px;background:#8c8c8c"></div>
<div class="a" style="left:1196px;top:71px;width:2px;height:869px;background:#f2f3f5"></div>
<div class="a" style="left:1203px;top:70px;width:2px;height:870px;background:#c6d9f5"></div>
<div class="a" style="left:1205px;top:71px;width:1px;height:869px;background:#8c8c8c"></div>
<div class="a" style="left:1203px;top:70px;width:789px;height:1px;background:#c6d9f5"></div>
<div class="a" style="left:1205px;top:71px;width:786px;height:2px;background:#8c8c8c"></div>
<div class="a" style="left:1990px;top:71px;width:2px;height:869px;background:#f6f8fc"></div>
<svg class="a" style="left:400px;top:44px" width="1600" height="30" viewBox="400 44 1600 30">
  <defs>
    <linearGradient id="tabg" x1="0" y1="0" x2="0" y2="1"><stop offset="0" stop-color="#f5f9ff"/><stop offset="0.35" stop-color="#e6effc"/><stop offset="0.45" stop-color="#cbdcf6"/><stop offset="1" stop-color="#c3d7f5"/></linearGradient>
  </defs>
  <!-- inactive tab -->
  <path d="M411.5 70.5 L431.5 50.5 H552.5 L533 71" fill="#cbced3" stroke="#8c8c8c" stroke-width="1"/>
  <path d="M413 70 L432 51.5 H551" fill="none" stroke="#f4f5f7" stroke-width="1"/>
  <!-- active tab v1 -->
  <path d="M537.5 71 L556.5 50.5 H768.5 V71 Z" fill="url(#tabg)" stroke="#8c8c8c" stroke-width="1"/>
  <path d="M539 71 L557 52 H767" fill="none" stroke="#ffffff" stroke-width="1"/>
  <!-- active tab v2 -->
  <path d="M1203.5 71 L1223.5 50.5 H1540.5 V71 Z" fill="url(#tabg)" stroke="#8c8c8c" stroke-width="1"/>
  <path d="M1205 71 L1224 52 H1539" fill="none" stroke="#ffffff" stroke-width="1"/>
  <!-- dropdown arrows -->
  <path d="M1181.5 57 h9 l-4.5 4.5z" fill="#707070"/>
  <path d="M1979 57 h9 l-4.5 4.5z" fill="#707070"/>
  <!-- close x -->
  <path d="M757.5 57.5 l6 6 M763.5 57.5 l-6 6" stroke="#555" stroke-width="1.1"/>
  <path d="M1528 57.5 l6 6 M1534 57.5 l-6 6" stroke="#555" stroke-width="1.1"/>
  <!-- start page icon -->
  <rect x="438" y="52" width="11" height="14" fill="#9cc8ff" fill-opacity="0.6"/>
  <path d="M443.5 53 L449 59.5 L443.5 64 L438 59.5 Z" fill="#1c3cdc"/>
  <path d="M443.5 55 L441 60 L443.5 62 Z" fill="#fff"/>
  <path d="M440 64 h7 v1.5 h-7z" fill="#1a1a60"/>
  <!-- house icon -->
  <path d="M560 60 L566 53.5 L572 59 V66 H560 Z" fill="#c6c8d2" stroke="#5a5a70" stroke-width="1"/>
  <path d="M566 53.5 L569 56.5 V66" fill="none" stroke="#5a5a70" stroke-width="1"/>
  <rect x="562" y="61" width="3" height="5" fill="#5a5a70"/>
  <!-- model icon -->
  <rect x="1228.5" y="52.5" width="11" height="12" fill="#fff" stroke="#222" stroke-width="1.2"/>
  <path d="M1234 52.5 V64.5 M1228.5 58.5 H1239.5 M1229 53 L1239 64 M1239 53 L1229 64" stroke="#222" stroke-width="0.9"/>
</svg>
<div class="t" style="left:455.5px;top:54.5px;color:#2c2c3a;letter-spacing:0.2px">Стартова сторінка</div>
<div class="t" style="left:583.5px;top:54.5px;color:#111;font-weight:bold;letter-spacing:-0.05px">Температурные нагр:Общий вид</div>
<div class="t" style="left:1253.5px;top:55px;color:#1a1a2a;letter-spacing:0.08px">Температурные нагр:Расчетная модель вариант 1 (17)</div>

</body></html>
